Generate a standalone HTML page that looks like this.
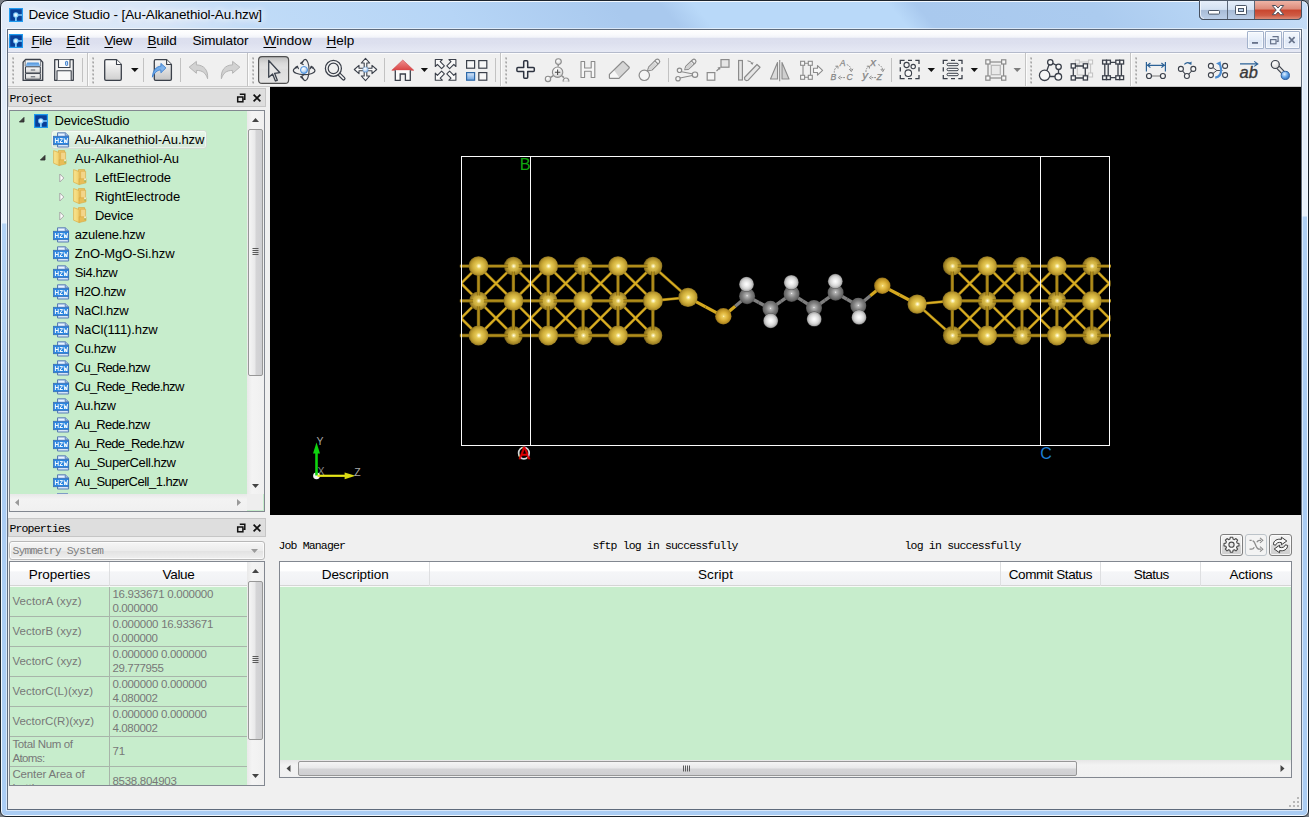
<!DOCTYPE html>
<html>
<head>
<meta charset="utf-8">
<title>Device Studio</title>
<style>
html,body{margin:0;padding:0;}
body{width:1309px;height:817px;overflow:hidden;position:relative;background:#7a7f86;font-family:"Liberation Sans",sans-serif;font-size:13px;color:#000;}
.abs{position:absolute;}
div,span{box-sizing:border-box;}
#frame{position:absolute;left:0;top:0;width:1309px;height:817px;border:1px solid #1c242e;border-radius:7px 7px 6px 6px;background:#dbe8f7;box-shadow:inset 0 0 0 1px #f2f8fe;}
#titlegrad{position:absolute;left:2px;top:2px;width:1305px;height:27px;border-radius:5px 5px 0 0;background:linear-gradient(50deg,#e0ebf8 0px,#d8e6f7 120px,#c0dbf7 200px,#b6d5f6 354px,#a9c9ee 484px,#a9c9ee 520px,#b9d9f9 546px,#b9d9f9 695px,#a9c9ee 716px,#abcbef 850px,#b6d4f4 930px,#c6ddf7 1012px);}
#frameside{position:absolute;left:2px;top:29px;width:1305px;height:786px;border-radius:0 0 4px 4px;background:linear-gradient(180deg,#dbe8f7 0px,#e9f1fb 194px,#b4d4f6 195px,#abcdf4 400px,#abcdf4 100%) 0 0/7px 100% no-repeat,linear-gradient(180deg,#dbe8f7 0px,#e9f1fb 187px,#b0d0f4 188px,#aaccf3 400px,#aaccf3 100%) 100% 0/7px 100% no-repeat,linear-gradient(#abcdf4,#abcdf4) 0 100%/100% 8px no-repeat;}
#client{position:absolute;left:7px;top:29px;width:1295px;height:781px;border:1px solid #5f6b7c;background:#f0f0f0;box-shadow:0 0 0 1px rgba(255,255,255,.55);}
.mono{font-family:"Liberation Mono",monospace;font-size:11.5px;letter-spacing:-0.9px;white-space:nowrap;line-height:12px;}
.t{position:absolute;white-space:nowrap;transform-origin:0 0;}
#title{left:29px;top:6px;font-size:13.5px;line-height:18px;text-shadow:0 0 6px #fff,0 0 10px #fff,0 0 14px rgba(255,255,255,.8);}
#menubar{left:8px;top:30px;width:1293px;height:23px;background:linear-gradient(#ffffff 0%,#fafbfd 20%,#f2f4f9 33%,#dcdfee 38%,#dde0ef 60%,#e6e9f4 100%);border-bottom:1px solid #b4bacb;}
.mi{position:absolute;top:33px;font-size:13.5px;line-height:16px;white-space:nowrap;transform-origin:0 0;}
.mi u{text-decoration:underline;text-underline-offset:1.5px;text-decoration-thickness:1px;}
#toolbar{left:8px;top:53px;width:1293px;height:34px;background:#f0f0f0;border-bottom:1px solid #c9c9c9;}
#viewport{left:270px;top:87px;width:1031px;height:428px;background:#000;}
.dockhdr{position:absolute;background:#dedede;border:1px solid #c6c6c6;}
.green{background:#c7edcc;}
.capbtn{position:absolute;top:1px;height:19px;}
.mdibtn{position:absolute;top:31px;width:17px;height:18px;border:1px solid #a3b2cb;border-radius:1px;background:linear-gradient(#f4f8fd,#e6eefa 50%,#dfe8f6 51%,#e8effa);box-shadow:inset 0 0 0 1px rgba(255,255,255,.6);}
.tr{position:absolute;font-size:13px;line-height:19px;white-space:nowrap;transform-origin:0 50%;}
.pr{position:absolute;font-size:11.5px;line-height:14px;color:#787878;white-space:nowrap;transform-origin:0 0;}
.hd{position:absolute;font-size:13.5px;line-height:16px;white-space:nowrap;text-align:center;}
.sbv{position:absolute;background:linear-gradient(90deg,#e9e9e9,#f4f4f4 30%,#f0f0f0);}
.thumbv{position:absolute;border:1px solid #979797;border-radius:2px;background:linear-gradient(90deg,#f5f5f5 0%,#e9e9ea 45%,#d4d4d6 55%,#cfcfd2 100%);}
.thumbh{position:absolute;border:1px solid #979797;border-radius:2px;background:linear-gradient(180deg,#f5f5f5 0%,#e9e9ea 45%,#d4d4d6 55%,#cfcfd2 100%);}
</style>
<style>
#title{letter-spacing:-0.131px;margin-left:-0.6px}
#m1{letter-spacing:-0.341px;margin-left:-0.6px}
#m2{letter-spacing:-0.070px;margin-left:-0.6px}
#m3{letter-spacing:-0.308px;margin-left:-0.6px}
#m4{letter-spacing:-0.186px;margin-left:-0.6px}
#m5{letter-spacing:-0.126px;margin-left:-0.6px}
#m6{letter-spacing:0.045px;margin-left:-0.6px}
#m7{letter-spacing:0.009px;margin-left:-0.6px}
#dk1{letter-spacing:-0.802px;margin-left:-0.6px}
#tr0{letter-spacing:-0.142px;margin-left:-0.6px}
#tr1{letter-spacing:-0.057px;margin-left:-0.6px}
#tr2{letter-spacing:0.014px;margin-left:-0.6px}
#tr3{letter-spacing:-0.047px;margin-left:-0.6px}
#tr4{letter-spacing:-0.006px;margin-left:-0.6px}
#tr5{letter-spacing:-0.275px;margin-left:-0.6px}
#tr6{letter-spacing:-0.226px;margin-left:-0.6px}
#tr7{letter-spacing:-0.043px;margin-left:-0.6px}
#tr8{letter-spacing:-0.447px;margin-left:-0.6px}
#tr9{letter-spacing:-0.424px;margin-left:-0.6px}
#tr10{letter-spacing:-0.241px;margin-left:-0.6px}
#tr11{letter-spacing:-0.096px;margin-left:-0.6px}
#tr12{letter-spacing:-0.427px;margin-left:-0.6px}
#tr13{letter-spacing:-0.632px;margin-left:-0.6px}
#tr14{letter-spacing:-0.698px;margin-left:-0.6px}
#tr15{letter-spacing:-0.307px;margin-left:-0.6px}
#tr16{letter-spacing:-0.568px;margin-left:-0.6px}
#tr17{letter-spacing:-0.653px;margin-left:-0.6px}
#tr18{letter-spacing:-0.385px;margin-left:-0.6px}
#tr19{letter-spacing:-0.500px;margin-left:-0.6px}
#dk2{letter-spacing:-0.832px;margin-left:-0.6px}
#dk3{letter-spacing:-0.855px;margin-left:-0.6px}
#ph1{letter-spacing:-0.013px;margin-left:-0.6px}
#ph2{letter-spacing:-0.266px;margin-left:-0.6px}
#pk0{letter-spacing:0.112px;margin-left:-0.6px}
#pv0_0{letter-spacing:-0.268px;margin-left:-0.6px}
#pv0_1{letter-spacing:-0.346px;margin-left:-0.6px}
#pk1{letter-spacing:0.062px;margin-left:-0.6px}
#pv1_0{letter-spacing:-0.268px;margin-left:-0.6px}
#pv1_1{letter-spacing:-0.346px;margin-left:-0.6px}
#pk2{letter-spacing:0.014px;margin-left:-0.6px}
#pv2_0{letter-spacing:-0.291px;margin-left:-0.6px}
#pv2_1{letter-spacing:-0.353px;margin-left:-0.6px}
#pk3{letter-spacing:0.055px;margin-left:-0.6px}
#pv3_0{letter-spacing:-0.291px;margin-left:-0.6px}
#pv3_1{letter-spacing:-0.346px;margin-left:-0.6px}
#pk4{letter-spacing:-0.005px;margin-left:-0.6px}
#pv4_0{letter-spacing:-0.291px;margin-left:-0.6px}
#pv4_1{letter-spacing:-0.346px;margin-left:-0.6px}
#pk5_0{letter-spacing:-0.364px;margin-left:-0.6px}
#pk5_1{letter-spacing:-0.599px;margin-left:-0.6px}
#pv5_0{letter-spacing:-0.048px;margin-left:-0.6px}
#pk6_0{letter-spacing:-0.140px;margin-left:-0.6px}
#pk6_1{letter-spacing:0.015px;margin-left:-0.6px}
#pv6_0{letter-spacing:-0.269px;margin-left:-0.6px}
#jm1{letter-spacing:-0.838px;margin-left:-0.6px}
#jm2{letter-spacing:-0.852px;margin-left:-0.6px}
#jm3{letter-spacing:-0.786px;margin-left:-0.6px}
#jh0{letter-spacing:-0.057px;margin-left:-0.6px}
#jh1{letter-spacing:0.114px;margin-left:-0.6px}
#jh2{letter-spacing:-0.395px;margin-left:-0.6px}
#jh3{letter-spacing:-0.564px;margin-left:-0.6px}
#jh4{letter-spacing:-0.154px;margin-left:-0.6px}
</style>
</head>
<body>
<div id="frame"></div>
<div id="titlegrad"></div>
<div id="frameside"></div>
<div id="client"></div>
<!-- title bar -->
<svg class="abs" style="left:9px;top:8px" width="14" height="14" viewBox="0 0 14 14"><rect width="14" height="14" fill="#0a3f98"/><path d="M0 0H14V14H0Z M1.2 1.2V12.8H12.8V1.2Z" fill="#1f9bf0" fill-rule="evenodd"/><path d="M6 6.2 H13 V7.8 H7.8 V13 H6 Z" fill="#7ccbfb"/><circle cx="6.8" cy="7" r="2.7" fill="#7ccbfb"/><circle cx="6.8" cy="7" r="1.7" fill="#e6f5ff"/></svg>
<div id="title" class="t">Device Studio - [Au-Alkanethiol-Au.hzw]</div>
<svg class="abs" style="left:1196px;top:0px" width="110" height="24" viewBox="1196 0 110 24">
<defs>
<linearGradient id="cbg" x1="0" y1="0" x2="0" y2="1"><stop offset="0" stop-color="#e6effa"/><stop offset=".47" stop-color="#d3e1f2"/><stop offset=".52" stop-color="#a8bcd7"/><stop offset="1" stop-color="#bccfe8"/></linearGradient>
<linearGradient id="cbr" x1="0" y1="0" x2="0" y2="1"><stop offset="0" stop-color="#eeb4a6"/><stop offset=".45" stop-color="#dc8a79"/><stop offset=".5" stop-color="#c8452e"/><stop offset=".8" stop-color="#cf5b44"/><stop offset="1" stop-color="#dd8c78"/></linearGradient>
</defs>
<path d="M1199.5 0.5 V15 Q1199.5 19.5 1204 19.5 H1297 Q1301.5 19.5 1301.5 15 V0.5 Z" fill="url(#cbg)" stroke="#4f5b6b" stroke-width="1"/>
<path d="M1254.5 1 V19 H1297 Q1301 19 1301 15 V1 Z" fill="url(#cbr)"/>
<path d="M1199.5 0.5 V15 Q1199.5 19.5 1204 19.5 H1297 Q1301.5 19.5 1301.5 15 V0.5" fill="none" stroke="#46505f" stroke-width="1"/>
<path d="M1227.5 1V19 M1254.5 1V19" stroke="#5a6677" stroke-width="1"/>
<path d="M1200.5 1.5 V15 Q1200.5 18.5 1204 18.5" fill="none" stroke="#f4f9ff" stroke-width="1" opacity=".8"/>
<rect x="1208.5" y="10.5" width="11" height="3.6" rx=".8" fill="#fff" stroke="#4a5667" stroke-width="1"/>
<rect x="1235.5" y="5.5" width="11" height="9" rx=".8" fill="#fff" stroke="#4a5667" stroke-width="1"/>
<rect x="1238.5" y="8.5" width="5" height="3" fill="#bcd1ea" stroke="#4a5667" stroke-width="1"/>
<path d="M1272.3 5.5 h3.4 l2.3 2.6 l2.3 -2.6 h3.4 l-3.9 4.6 l3.9 4.6 h-3.4 l-2.3 -2.6 l-2.3 2.6 h-3.4 l3.9 -4.6 Z" fill="#fff" stroke="#4a4f5c" stroke-width="1" stroke-linejoin="round"/>
</svg>
<!-- menubar -->
<div id="menubar" class="abs"></div>
<svg class="abs" style="left:9px;top:34px" width="14" height="14" viewBox="0 0 14 14"><rect width="14" height="14" fill="#0a3f98"/><path d="M0 0H14V14H0Z M1.2 1.2V12.8H12.8V1.2Z" fill="#1f9bf0" fill-rule="evenodd"/><path d="M6 6.2 H13 V7.8 H7.8 V13 H6 Z" fill="#7ccbfb"/><circle cx="6.8" cy="7" r="2.7" fill="#7ccbfb"/><circle cx="6.8" cy="7" r="1.7" fill="#e6f5ff"/></svg>
<div class="mi" id="m1" style="left:32px"><u>F</u>ile</div>
<div class="mi" id="m2" style="left:67px"><u>E</u>dit</div>
<div class="mi" id="m3" style="left:105px"><u>V</u>iew</div>
<div class="mi" id="m4" style="left:148px"><u>B</u>uild</div>
<div class="mi" id="m5" style="left:193px">Simulator</div>
<div class="mi" id="m6" style="left:264px"><u>W</u>indow</div>
<div class="mi" id="m7" style="left:327px"><u>H</u>elp</div>
<div class="mdibtn" style="left:1247px"></div><div class="mdibtn" style="left:1265px"></div><div class="mdibtn" style="left:1283px"></div>
<svg class="abs" style="left:1247px;top:31px" width="54" height="18" viewBox="1247 31 54 18">
<rect x="1252" y="42" width="6" height="1.8" fill="#66728a"/>
<path d="M1272.5 36.7 h5.6 v4.6 h-1.6" fill="none" stroke="#66728a" stroke-width="1.2"/><rect x="1270.6" y="39.6" width="5.4" height="4.2" fill="#e9f0fa" stroke="#66728a" stroke-width="1.2"/>
<path d="M1289 37.2 l5.6 5.8 M1294.6 37.2 l-5.6 5.8" stroke="#66728a" stroke-width="1.7"/>
</svg>
<!-- toolbar -->
<div id="toolbar" class="abs"></div><div class="abs" style="left:8px;top:53px;width:1293px;height:1px;background:#fcfcfc"></div>
<svg class="abs" style="left:0;top:52px" width="1309" height="36" viewBox="0 52 1309 36">
<defs>
<pattern id="grip" x="0" y="57" width="4" height="4" patternUnits="userSpaceOnUse"><rect x="1" y=".8" width="2" height="2" fill="#bdbdbd"/><rect x="2" y="1.8" width="1" height="1" fill="#a2a2a2"/></pattern>
<linearGradient id="pg" x1="0" y1="0" x2="0" y2="1"><stop offset="0" stop-color="#fdfdfd"/><stop offset="1" stop-color="#cfcfcf"/></linearGradient>
<linearGradient id="pg2" x1="0" y1="0" x2="0" y2="1"><stop offset="0" stop-color="#f6f6f6"/><stop offset="1" stop-color="#d9d9d9"/></linearGradient>
<linearGradient id="bl" x1="0" y1="0" x2="0" y2="1"><stop offset="0" stop-color="#4d93dc"/><stop offset="1" stop-color="#8fc1f2"/></linearGradient>
<radialGradient id="ball" cx=".4" cy=".35" r=".7"><stop offset="0" stop-color="#e8f3ff"/><stop offset=".5" stop-color="#6aa9ea"/><stop offset="1" stop-color="#2f6fbe"/></radialGradient>
<radialGradient id="ball2" cx=".38" cy=".3" r=".8"><stop offset="0" stop-color="#ffffff"/><stop offset=".45" stop-color="#cfe2f7"/><stop offset="1" stop-color="#5b9ae0"/></radialGradient>
<linearGradient id="bl2" x1="0" y1="0" x2="0" y2="1"><stop offset="0" stop-color="#dbe8f8"/><stop offset="1" stop-color="#6ea4e0"/></linearGradient>
<linearGradient id="red" x1="0" y1="0" x2="0" y2="1"><stop offset="0" stop-color="#ee8e8e"/><stop offset="1" stop-color="#d94444"/></linearGradient>
<linearGradient id="selb" x1="0" y1="0" x2="0" y2="1"><stop offset="0" stop-color="#bcbcbc"/><stop offset=".25" stop-color="#dadada"/><stop offset=".44" stop-color="#e2e2e2"/><stop offset=".45" stop-color="#dddddd"/><stop offset="1" stop-color="#e4e4e4"/></linearGradient>
<linearGradient id="gry" x1="0" y1="0" x2="0" y2="1"><stop offset="0" stop-color="#fafafa"/><stop offset="1" stop-color="#c4c4c4"/></linearGradient>
</defs>
<!-- toolbar dividers & grips -->
<g stroke="#c4c4c4" stroke-width="1">
<path d="M87.5 53V86 M247.5 53V86 M500.5 53V86 M1025.5 53V86 M1130.5 53V86"/>
</g>
<g stroke="#fcfcfc" stroke-width="1"><path d="M88.5 53V86 M248.5 53V86 M501.5 53V86 M1026.5 53V86 M1131.5 53V86"/></g>
<g><rect x="12" y="57.3" width="2" height="2" fill="#bdbdbd"/><rect x="13" y="58.3" width="1" height="1" fill="#9f9f9f"/><rect x="12" y="61.3" width="2" height="2" fill="#bdbdbd"/><rect x="13" y="62.3" width="1" height="1" fill="#9f9f9f"/><rect x="12" y="65.3" width="2" height="2" fill="#bdbdbd"/><rect x="13" y="66.3" width="1" height="1" fill="#9f9f9f"/><rect x="12" y="69.3" width="2" height="2" fill="#bdbdbd"/><rect x="13" y="70.3" width="1" height="1" fill="#9f9f9f"/><rect x="12" y="73.3" width="2" height="2" fill="#bdbdbd"/><rect x="13" y="74.3" width="1" height="1" fill="#9f9f9f"/><rect x="12" y="77.3" width="2" height="2" fill="#bdbdbd"/><rect x="13" y="78.3" width="1" height="1" fill="#9f9f9f"/><rect x="12" y="81.3" width="2" height="2" fill="#bdbdbd"/><rect x="13" y="82.3" width="1" height="1" fill="#9f9f9f"/><rect x="92" y="57.3" width="2" height="2" fill="#bdbdbd"/><rect x="93" y="58.3" width="1" height="1" fill="#9f9f9f"/><rect x="92" y="61.3" width="2" height="2" fill="#bdbdbd"/><rect x="93" y="62.3" width="1" height="1" fill="#9f9f9f"/><rect x="92" y="65.3" width="2" height="2" fill="#bdbdbd"/><rect x="93" y="66.3" width="1" height="1" fill="#9f9f9f"/><rect x="92" y="69.3" width="2" height="2" fill="#bdbdbd"/><rect x="93" y="70.3" width="1" height="1" fill="#9f9f9f"/><rect x="92" y="73.3" width="2" height="2" fill="#bdbdbd"/><rect x="93" y="74.3" width="1" height="1" fill="#9f9f9f"/><rect x="92" y="77.3" width="2" height="2" fill="#bdbdbd"/><rect x="93" y="78.3" width="1" height="1" fill="#9f9f9f"/><rect x="92" y="81.3" width="2" height="2" fill="#bdbdbd"/><rect x="93" y="82.3" width="1" height="1" fill="#9f9f9f"/><rect x="252" y="57.3" width="2" height="2" fill="#bdbdbd"/><rect x="253" y="58.3" width="1" height="1" fill="#9f9f9f"/><rect x="252" y="61.3" width="2" height="2" fill="#bdbdbd"/><rect x="253" y="62.3" width="1" height="1" fill="#9f9f9f"/><rect x="252" y="65.3" width="2" height="2" fill="#bdbdbd"/><rect x="253" y="66.3" width="1" height="1" fill="#9f9f9f"/><rect x="252" y="69.3" width="2" height="2" fill="#bdbdbd"/><rect x="253" y="70.3" width="1" height="1" fill="#9f9f9f"/><rect x="252" y="73.3" width="2" height="2" fill="#bdbdbd"/><rect x="253" y="74.3" width="1" height="1" fill="#9f9f9f"/><rect x="252" y="77.3" width="2" height="2" fill="#bdbdbd"/><rect x="253" y="78.3" width="1" height="1" fill="#9f9f9f"/><rect x="252" y="81.3" width="2" height="2" fill="#bdbdbd"/><rect x="253" y="82.3" width="1" height="1" fill="#9f9f9f"/><rect x="505" y="57.3" width="2" height="2" fill="#bdbdbd"/><rect x="506" y="58.3" width="1" height="1" fill="#9f9f9f"/><rect x="505" y="61.3" width="2" height="2" fill="#bdbdbd"/><rect x="506" y="62.3" width="1" height="1" fill="#9f9f9f"/><rect x="505" y="65.3" width="2" height="2" fill="#bdbdbd"/><rect x="506" y="66.3" width="1" height="1" fill="#9f9f9f"/><rect x="505" y="69.3" width="2" height="2" fill="#bdbdbd"/><rect x="506" y="70.3" width="1" height="1" fill="#9f9f9f"/><rect x="505" y="73.3" width="2" height="2" fill="#bdbdbd"/><rect x="506" y="74.3" width="1" height="1" fill="#9f9f9f"/><rect x="505" y="77.3" width="2" height="2" fill="#bdbdbd"/><rect x="506" y="78.3" width="1" height="1" fill="#9f9f9f"/><rect x="505" y="81.3" width="2" height="2" fill="#bdbdbd"/><rect x="506" y="82.3" width="1" height="1" fill="#9f9f9f"/><rect x="1030" y="57.3" width="2" height="2" fill="#bdbdbd"/><rect x="1031" y="58.3" width="1" height="1" fill="#9f9f9f"/><rect x="1030" y="61.3" width="2" height="2" fill="#bdbdbd"/><rect x="1031" y="62.3" width="1" height="1" fill="#9f9f9f"/><rect x="1030" y="65.3" width="2" height="2" fill="#bdbdbd"/><rect x="1031" y="66.3" width="1" height="1" fill="#9f9f9f"/><rect x="1030" y="69.3" width="2" height="2" fill="#bdbdbd"/><rect x="1031" y="70.3" width="1" height="1" fill="#9f9f9f"/><rect x="1030" y="73.3" width="2" height="2" fill="#bdbdbd"/><rect x="1031" y="74.3" width="1" height="1" fill="#9f9f9f"/><rect x="1030" y="77.3" width="2" height="2" fill="#bdbdbd"/><rect x="1031" y="78.3" width="1" height="1" fill="#9f9f9f"/><rect x="1030" y="81.3" width="2" height="2" fill="#bdbdbd"/><rect x="1031" y="82.3" width="1" height="1" fill="#9f9f9f"/><rect x="1135" y="57.3" width="2" height="2" fill="#bdbdbd"/><rect x="1136" y="58.3" width="1" height="1" fill="#9f9f9f"/><rect x="1135" y="61.3" width="2" height="2" fill="#bdbdbd"/><rect x="1136" y="62.3" width="1" height="1" fill="#9f9f9f"/><rect x="1135" y="65.3" width="2" height="2" fill="#bdbdbd"/><rect x="1136" y="66.3" width="1" height="1" fill="#9f9f9f"/><rect x="1135" y="69.3" width="2" height="2" fill="#bdbdbd"/><rect x="1136" y="70.3" width="1" height="1" fill="#9f9f9f"/><rect x="1135" y="73.3" width="2" height="2" fill="#bdbdbd"/><rect x="1136" y="74.3" width="1" height="1" fill="#9f9f9f"/><rect x="1135" y="77.3" width="2" height="2" fill="#bdbdbd"/><rect x="1136" y="78.3" width="1" height="1" fill="#9f9f9f"/><rect x="1135" y="81.3" width="2" height="2" fill="#bdbdbd"/><rect x="1136" y="82.3" width="1" height="1" fill="#9f9f9f"/></g>
<!-- separators -->
<g stroke="#c2c2c2" stroke-width="1"><path d="M82.5 58V82 M143.5 58V82 M180.5 58V82 M384.5 58V82 M495.5 58V82 M668.5 58V82 M891.5 58V82"/></g>

<!-- 1 drawer -->
<g stroke="#3b404a" stroke-width="1.3" stroke-linejoin="round">
<path d="M25.6 59.5 H40.2 L42.7 62.2 V80.4 H23.1 V62.2 Z" fill="url(#pg2)"/>
<path d="M27.2 62.5 H38.6 L40.4 66.4 H25.4 Z" fill="url(#bl)" stroke="none"/>
<path d="M25.2 60.6 L25.2 66 M40.6 60.6 V66" stroke="#6a6f78" stroke-width=".9" fill="none"/>
<rect x="25.5" y="66.8" width="14.8" height="6.2" fill="url(#pg)" stroke-width="1"/>
<rect x="25.5" y="73.6" width="14.8" height="5.6" fill="url(#pg)" stroke-width="1"/>
<path d="M30.8 70 H35.2 M30.8 76.8 H35.2" stroke="#555b66" stroke-width="1"/>
</g>
<!-- 2 floppy -->
<g stroke="#3b404a" stroke-width="1.3" stroke-linejoin="round">
<path d="M54.7 59.7 H73.3 V80.3 H54.7 Z" fill="#f1f1f1"/>
<path d="M58.5 59.7 V67.5 H70 V59.7" fill="#fbfbfb" stroke-width="1.1"/>
<rect x="65.6" y="61.4" width="2" height="4" rx=".6" fill="#cfe2f8" stroke="#2b74c9" stroke-width=".9"/>
<path d="M57 80.3 V70.8 H71.2 V80.3" fill="#f8f8f8" stroke-width="1.1"/>
</g>
<!-- 3 new doc -->
<path d="M106 59.7 H116.5 L121.3 64.5 V79 Q121.3 80.3 120 80.3 H106 Q104.7 80.3 104.7 79 V61 Q104.7 59.7 106 59.7 Z" fill="url(#pg)" stroke="#3b404a" stroke-width="1.3" stroke-linejoin="round"/>
<path d="M116.5 59.7 V64.5 H121.3" fill="#fff" stroke="#3b404a" stroke-width="1.1" stroke-linejoin="round"/>
<path d="M131 68 H138.6 L134.8 72 Z" fill="#111"/>
<!-- 4 import -->
<path d="M155.6 59.7 H166.6 L171.4 64.5 V79 Q171.4 80.3 170.1 80.3 H155.6 Q154.3 80.3 154.3 79 V61 Q154.3 59.7 155.6 59.7 Z" fill="url(#gry)" stroke="#3b404a" stroke-width="1.3" stroke-linejoin="round"/>
<path d="M166.6 59.7 V64.5 H171.4" fill="#f6f6f6" stroke="#3b404a" stroke-width="1.1" stroke-linejoin="round"/>
<defs><linearGradient id="imp" x1="0" y1="0" x2="1" y2="1"><stop offset="0" stop-color="#4f95e2"/><stop offset="1" stop-color="#a6ccf5"/></linearGradient></defs>
<path d="M152.4 77.2 C152.8 70.6 156 66.4 160.9 66.2 V63.4 L165.9 67.9 L160.9 72.8 V70 C157.3 70 154.6 72.4 152.4 77.2 Z" fill="url(#imp)" stroke="#3a7fd0" stroke-width=".9" stroke-linejoin="round"/>
<!-- undo / redo -->
<path d="M189.2 67.1 L196.4 61.4 V64.9 C204.3 65 208.3 70.5 207.6 78.7 C205.8 73 202.6 70.4 196.4 70.4 V73.3 Z" fill="#d2d2d2" stroke="#b4b4b4" stroke-width="1" stroke-linejoin="round"/>
<path d="M239.8 67.1 L232.6 61.4 V64.9 C224.7 65 220.7 70.5 221.4 78.7 C223.2 73 226.4 70.4 232.6 70.4 V73.3 Z" fill="#d2d2d2" stroke="#b4b4b4" stroke-width="1" stroke-linejoin="round"/>

<!-- select (pressed) -->
<rect x="258.6" y="56.6" width="30" height="26.8" rx="3.5" fill="url(#selb)" stroke="#505050" stroke-width="1.2"/>
<path d="M268.7 60.5 V77.3 L272.6 74 L275.4 81 L277.3 80.3 L274.6 73.3 L279.9 72.7 Z" fill="#e6e6e6" stroke="#3b424d" stroke-width="1.3" stroke-linejoin="round"/>
<!-- rotate -->
<g fill="none" stroke="#3b404a" stroke-width="1.15" stroke-linecap="round" stroke-linejoin="round">
<path d="M297.2 67.4 A10.8 4.1 0 1 0 311.4 67.5"/>
<path d="M295.3 67.6 L297.4 66.2 L298.4 68.6 M313.2 67.6 L311.2 66.3 L310.2 68.7"/>
<path d="M302.2 63.2 A3.9 10.6 0 1 1 302.2 76.9"/>
<path d="M302.9 61.4 L300.6 63.3 L303.2 64.6 M302.9 78.7 L300.6 76.8 L303.2 75.5"/>
</g>
<circle cx="304" cy="70" r="3.5" fill="url(#ball2)" stroke="#3a86d8" stroke-width=".9"/>
<!-- zoom -->
<path d="M339.3 74.3 L343.6 78.6" stroke="#3b404a" stroke-width="3.9" stroke-linecap="round"/>
<path d="M339.3 74.3 L343.5 78.5" stroke="#f6f6f6" stroke-width="1.6" stroke-linecap="round"/>
<circle cx="333.4" cy="68.4" r="8" fill="#f3f3f3" stroke="#3b404a" stroke-width="1.25"/>
<circle cx="333.4" cy="68.4" r="5.2" fill="#f0f0f0" stroke="#3b404a" stroke-width="1.2"/>
<!-- move -->
<path d="M365.5 58.3 L369.7 63 H366.8 V68.2 H372 V65.3 L376.7 69.5 L372 73.7 V70.8 H366.8 V76 H369.7 L365.5 80.7 L361.3 76 H364.2 V70.8 H359 V73.7 L354.3 69.5 L359 65.3 V68.2 H364.2 V63 H361.3 Z" fill="#fafafa" stroke="#3b404a" stroke-width="1.1" stroke-linejoin="round"/>
<circle cx="365.5" cy="69.6" r="2.7" fill="url(#ball2)" stroke="#6fa0d8" stroke-width=".5"/>
<!-- home -->
<path d="M391.8 70.3 L402.8 60 L413.8 70.3 Z" fill="url(#red)" stroke="#cf4a4e" stroke-width=".6" stroke-linejoin="round"/>
<path d="M395.3 70.3 V80.3 H400.2 V74 H405.4 V80.3 H410.3 V70.3" fill="#fbfbfb" stroke="#3b404a" stroke-width="1.3" stroke-linejoin="miter"/>
<path d="M420.8 68 H428 L424.4 72 Z" fill="#111"/>
<!-- fit (4 arrows) -->
<g fill="#fafafa" stroke="#3b404a" stroke-width="1.1" stroke-linejoin="round">
<path d="M435.3 59.5 H442.3 L440.2 61.6 L444.4 65.8 L441.6 68.6 L437.4 64.4 L435.3 66.5 Z"/>
<path d="M455.9 59.5 H448.9 L451 61.6 L446.8 65.8 L449.6 68.6 L453.8 64.4 L455.9 66.5 Z"/>
<path d="M435.3 80.2 H442.3 L440.2 78.1 L444.4 73.9 L441.6 71.1 L437.4 75.3 L435.3 73.2 Z"/>
<path d="M455.9 80.2 H448.9 L451 78.1 L446.8 73.9 L449.6 71.1 L453.8 75.3 L455.9 73.2 Z"/>
</g>
<!-- grid -->
<g stroke="#3b404a" stroke-width="1.2" fill="#f7f7f7">
<rect x="466.6" y="60.6" width="8" height="7.6"/><rect x="478.8" y="60.6" width="8" height="7.6"/><rect x="478.8" y="72.6" width="8" height="7.6"/>
<rect x="466.6" y="72.6" width="8" height="7.6" fill="url(#bl2)" stroke="#2f69a8"/>
</g>

<!-- plus -->
<path d="M523.7 61.7 Q523.7 60.7 524.7 60.7 H526.7 Q527.7 60.7 527.7 61.7 V67.4 H533.3 Q534.3 67.4 534.3 68.4 V70.4 Q534.3 71.4 533.3 71.4 H527.7 V77.3 Q527.7 78.3 526.7 78.3 H524.7 Q523.7 78.3 523.7 77.3 V71.4 H517.9 Q516.9 71.4 516.9 70.4 V68.4 Q516.9 67.4 517.9 67.4 H523.7 Z" fill="#f4f4f4" stroke="#2d3340" stroke-width="1.5" stroke-linejoin="round"/>
<!-- add atom -->
<defs><radialGradient id="gball" cx=".4" cy=".3" r=".8"><stop offset="0" stop-color="#ffffff"/><stop offset=".6" stop-color="#e4e4e4"/><stop offset="1" stop-color="#bdbdbd"/></radialGradient></defs>
<g stroke="#8d8d8d" stroke-width="1.1" fill="url(#gball)">
<path d="M558.2 66.5 V64 M553.3 75.6 L550.3 77.6 M561.8 75.8 L564 77.6" fill="none" stroke-width="1.5"/>
<circle cx="558.4" cy="61.6" r="2.9"/><circle cx="548" cy="79" r="2.7"/><path d="M563.2 81.6 A2.9 2.9 0 1 1 568.8 81.6" />
<circle cx="557.6" cy="72.2" r="5.2"/>
<path d="M557.6 69.5 V74.9 M554.9 72.2 H560.3" stroke="#4b4b4b" stroke-width="1.1"/>
</g>
<!-- H -->
<path d="M581 61.5 H584.6 V68 H591.2 V61.5 H594.8 V77.5 H591.2 V71.2 H584.6 V77.5 H581 Z" fill="#f7f7f7" stroke="#8b8b8b" stroke-width="1.1" stroke-linejoin="round"/>
<!-- eraser -->
<path d="M609.4 74.4 L622.3 61.7 Q622.9 61.1 623.5 61.7 L629 67 Q629.6 67.7 629 68.3 L619 78.4 H610 Q609.4 78.4 609.4 77.8 Z" fill="#f8f8f8"/>
<path d="M613.9 70 L622.9 61.3 L629.3 67.6 L619.3 77.6 Z" fill="#d6d6d6"/>
<path d="M609.4 74.4 L622.3 61.7 Q622.9 61.1 623.5 61.7 L629 67 Q629.6 67.7 629 68.3 L619 78.4 H610 Q609.4 78.4 609.4 77.8 Z" fill="none" stroke="#8b8b8b" stroke-width="1.2" stroke-linejoin="round"/>
<!-- bond pen -->
<g stroke="#8b8b8b" stroke-width="1.2" fill="#f5f5f5">
<circle cx="644.3" cy="75.3" r="5.2"/>
<path d="M647.5 71 L648.8 66.8 L656 59.6 Q657.6 58.4 659 59.8 Q660.4 61.3 659.2 62.8 L652 70 Z" stroke-linejoin="round"/><path d="M648.2 70.3 L649.2 67.3 L654.2 62.3 L656.6 64.7 L651.6 69.6 Z" fill="#d4d4d4" stroke="none"/>
<path d="M654.8 60.8 L658 64" fill="none"/>
</g>
<!-- measure pen -->
<g stroke="#8b8b8b" stroke-width="1.2" fill="#f5f5f5">
<path d="M680.3 71.5 L694.5 74.3 M678.8 78.3 L693.5 75.3" fill="none" stroke-width="1.1"/>
<circle cx="679.5" cy="70.3" r="2.2"/><circle cx="678" cy="78.7" r="2.2"/><circle cx="695" cy="74.7" r="2.7"/>
<path d="M684.8 69.6 L685.7 66.4 L692.6 59.7 Q694.1 58.6 695.4 59.9 Q696.6 61.3 695.5 62.7 L688.3 69.4 Z" stroke-linejoin="round" fill="#f3f3f3"/><path d="M685.2 69.2 L686 66.8 L690.8 62.2 L693.2 64.6 L688.2 69 Z" fill="#d2d2d2" stroke="none"/><path d="M691.4 60.9 L694.3 63.8" fill="none"/>
</g>
<!-- scale squares -->
<g stroke="#8b8b8b" stroke-width="1.2" fill="#f5f5f5">
<rect x="707.2" y="72.6" width="7.6" height="7.6"/>
<rect x="721" y="59.6" width="8" height="7.6" fill="#e6e6e6"/>
<path d="M716.5 71 L720 67.6" fill="none"/><path d="M720.6 66.9 l-3.2 .6 l2.6 2.6 Z" fill="#8b8b8b" stroke="none"/>
</g>
<!-- rotate bar -->
<g stroke="#8b8b8b" stroke-width="1.2" fill="#e6e6e6">
<rect x="738.6" y="60.5" width="3.8" height="19.5"/>
<path d="M744.5 77.5 L757 64.5 L760 67.3 L748 80.3 Q746 81 744.8 79.7 Z" stroke-linejoin="round"/>
<path d="M747.5 60.8 Q751.5 61 752.2 64" fill="none" stroke-width="1"/><path d="M753.6 62.3 l-1.3 2.6 l-1.9 -2 Z" fill="#8b8b8b" stroke="none"/>
</g>
<!-- mirror -->
<g stroke="#8b8b8b" stroke-width="1.1">
<path d="M779.7 60 V81.3" fill="none"/>
<path d="M777.5 62.5 V79 H770.5 Z" fill="#dcdcdc" stroke-linejoin="round"/>
<path d="M782 62.5 V79 H789 Z" fill="#cfcfcf" stroke-linejoin="round"/>
</g>
<!-- move group -->
<g stroke="#8b8b8b" stroke-width="1.1" fill="#f7f7f7">
<path d="M803 63.3 H810.5 V77.3 H803 Z" fill="none"/>
<rect x="800.6" y="61.3" width="4" height="4"/><rect x="808.3" y="61.3" width="4" height="4"/><rect x="800.6" y="75.3" width="4" height="4"/><rect x="808.3" y="75.3" width="4" height="4"/>
<path d="M813.5 68.3 H817.5 V65.6 L822.6 70.4 L817.5 75.2 V72.5 H813.5 Z" stroke-linejoin="round"/>
</g>
<!-- ABC -->
<g fill="#868686" stroke="#868686" stroke-width=".25" font-family="Liberation Sans" font-style="italic" font-size="8.6px">
<text x="839.8" y="66.4">A</text><text x="830.4" y="80.4">B</text><text x="846.4" y="80.4">C</text>
</g>
<g fill="none" stroke="#8c8c8c" stroke-width="1" stroke-dasharray="1.8 .9">
<path d="M846.8 64.6 Q850.8 66 851.3 70.6 M845 77.6 H839.6 M834.3 72.6 Q834 68.6 837.6 66.3"/>
</g>
<path d="M849.3 69 l2 2.6 l1.6 -2.8 M840.6 76 l-2.3 1.6 l2.3 1.6 M835.4 66.2 h2.6 v2.4" fill="none" stroke="#8c8c8c" stroke-width="1"/>
<!-- xyz -->
<g fill="#868686" stroke="#868686" stroke-width=".25" font-family="Liberation Sans" font-style="italic" font-size="11.6px">
<text x="870.3" y="65.7">x</text><text x="862.3" y="78.5">y</text><text x="876.6" y="79.8">z</text>
</g>
<g fill="none" stroke="#8c8c8c" stroke-width="1" stroke-dasharray="1.8 .9">
<path d="M878.3 64.6 Q882.3 66 882.8 70.6 M876 77.6 H870.6 M866 72 Q865.6 68.4 869 66.3"/>
</g>
<path d="M880.8 69 l2 2.6 l1.6 -2.8 M871.6 76 l-2.3 1.6 l2.3 1.6 M866.8 66.2 h2.6 v2.4" fill="none" stroke="#8c8c8c" stroke-width="1"/>

<!-- select dashed -->
<g fill="none" stroke="#3b404a" stroke-width="1.3">
<path d="M900.3 64 V60.3 H904.6 M908 60.3 H912 M915.3 60.3 H919 V64 M919 67.3 V71.6 M919 75 V78.7 H915.3 M912 78.7 H908 M904.6 78.7 H900.3 V75 M900.3 71.6 V67.3"/>
<circle cx="906.6" cy="65" r="2.6" fill="#f7f7f7" stroke-width="1.1"/><circle cx="913.2" cy="66.6" r="2.2" fill="#f7f7f7" stroke-width="1.1"/><circle cx="908.3" cy="73.2" r="3.3" fill="#f7f7f7" stroke-width="1.1"/>
</g>
<path d="M927.6 68 H935 L931.3 72 Z" fill="#111"/>
<!-- align dashed -->
<g fill="none" stroke="#3b404a" stroke-width="1.3">
<path d="M943.3 64 V60.3 H947.6 M951 60.3 H955 M958.3 60.3 H962 V64 M962 67.3 V71.6 M962 75 V78.7 H958.3 M955 78.7 H951 M947.6 78.7 H943.3 V75 M943.3 71.6 V67.3"/>
<rect x="947" y="63.3" width="11.3" height="2.4" rx="1.2" fill="#f7f7f7" stroke-width="1"/><rect x="947" y="68.3" width="11.3" height="2.4" rx="1.2" fill="#f7f7f7" stroke-width="1"/><rect x="947" y="73.3" width="11.3" height="2.4" rx="1.2" fill="#f7f7f7" stroke-width="1"/>
</g>
<path d="M970.7 68 H978 L974.3 72 Z" fill="#111"/>
<!-- frame -->
<g stroke="#8b8b8b" stroke-width="1.2" fill="#f7f7f7">
<rect x="988" y="62" width="15.6" height="16" fill="none"/>
<rect x="991.3" y="65.3" width="9" height="9.4" fill="#e9e9e9" stroke="#b5b5b5"/>
<rect x="985.8" y="59.8" width="4.2" height="4.2"/><rect x="1001.6" y="59.8" width="4.2" height="4.2"/><rect x="985.8" y="76" width="4.2" height="4.2"/><rect x="1001.6" y="76" width="4.2" height="4.2"/>
</g>
<path d="M1013.5 68 H1021 L1017.2 72 Z" fill="#7d7d7d"/>

<!-- molecule -->
<g stroke="#3b404a" stroke-width="1.3" fill="#f7f7f7">
<path d="M1046 73 L1050 62 L1058.5 66.5 V76.5 H1046" fill="none"/>
<circle cx="1050.3" cy="62.3" r="2.7"/><circle cx="1058.6" cy="66.8" r="2.7"/><circle cx="1058.3" cy="76.8" r="3.3"/><circle cx="1044.6" cy="75.3" r="5.2"/>
</g>
<!-- crystal -->
<g stroke="#c2c2c2" stroke-width="1" fill="#f4f4f4">
<path d="M1077.3 62 H1090.6 V75 H1077.3 Z" fill="none"/>
<rect x="1075.3" y="60" width="4" height="4"/><rect x="1088.6" y="60" width="4" height="4"/><rect x="1088.6" y="73" width="4" height="4"/>
</g>
<g stroke="#3b404a" stroke-width="1.3" fill="#f7f7f7">
<path d="M1073.3 66 H1085.3 V78 H1073.3 Z" fill="none"/>
<rect x="1071.2" y="63.8" width="4.2" height="4.2"/><rect x="1083.3" y="63.8" width="4.2" height="4.2"/><rect x="1071.2" y="75.8" width="4.2" height="4.2"/><rect x="1083.3" y="75.8" width="4.2" height="4.2"/>
</g>
<!-- device -->
<g stroke="#3b404a" stroke-width="1.3" fill="#f7f7f7">
<path d="M1104.8 62 V78 M1108.2 62 V78 M1118 62 V78 M1121.4 62 V78 M1108.5 62.3 H1118 M1108.5 77.7 H1118" fill="none"/>
<rect x="1102.6" y="60.2" width="3.8" height="3.8"/><rect x="1106.6" y="60.2" width="3.8" height="3.8"/><rect x="1115.8" y="60.2" width="3.8" height="3.8"/><rect x="1119.8" y="60.2" width="3.8" height="3.8"/>
<rect x="1102.6" y="75.8" width="3.8" height="3.8"/><rect x="1106.6" y="75.8" width="3.8" height="3.8"/><rect x="1115.8" y="75.8" width="3.8" height="3.8"/><rect x="1119.8" y="75.8" width="3.8" height="3.8"/>
</g>

<!-- measure distance -->
<g fill="none" stroke="#2b6196" stroke-width="1.2">
<path d="M1146.4 62 V71.6 M1165.4 62 V71.6 M1147.5 65.3 H1164.5"/>
<path d="M1150.4 63 L1147.6 65.3 L1150.4 67.6 M1161.4 63 L1164.2 65.3 L1161.4 67.6"/>
</g>
<g stroke="#3b404a" stroke-width="1.2" fill="#f7f7f7"><path d="M1152 76 H1160" stroke="#8a8a8a" fill="none"/><circle cx="1149" cy="76" r="2.5"/><circle cx="1162.9" cy="76" r="2.5"/></g>
<!-- angle -->
<g stroke="#3b404a" stroke-width="1.1" fill="#f7f7f7">
<path d="M1181.3 69.5 L1187 76 L1193 69.5" fill="none"/>
<circle cx="1180.9" cy="68.9" r="2.5"/><circle cx="1193.3" cy="68.9" r="2.5"/><circle cx="1186.9" cy="76" r="2.5"/>
</g>
<path d="M1184.3 64.3 Q1187 61.6 1190 63.2" fill="none" stroke="#2b6196" stroke-width="1.1"/><path d="M1191.6 61.4 l-.2 3.6 l-3.2 -1.5 Z" fill="#2b6196"/>
<!-- torsion -->
<g stroke="#3b404a" stroke-width="1.1" fill="#f7f7f7">
<path d="M1212.6 67.3 L1216.8 70.5 L1212.6 73.7 M1216.8 70.5 H1222.5" fill="none" stroke-width=".9"/>
<circle cx="1210.9" cy="65.9" r="2.5"/><circle cx="1225.1" cy="65.9" r="2.5"/><circle cx="1210.9" cy="75.1" r="2.5"/><circle cx="1225.1" cy="75.1" r="2.5"/>
</g>
<path d="M1215.2 77.6 Q1221.6 76.8 1221 69 Q1220.6 64.6 1218.8 63" fill="none" stroke="#4a8bd0" stroke-width="2.1"/><path d="M1216 63.4 l4.6 -2.2 l.4 4.8 Z" fill="#4a8bd0"/>
<!-- ab -->
<path d="M1240 63.9 H1257.6 M1254.2 61.4 L1257.8 63.9 L1254.2 66.4" stroke="#2b6196" stroke-width="1.1" fill="none"/>
<text x="1239.6" y="78" font-family="Liberation Sans" font-style="italic" font-size="15.6px" fill="#383838" stroke="#383838" stroke-width=".35" textLength="18.2" lengthAdjust="spacingAndGlyphs">ab</text>
<!-- bond -->
<path d="M1278 67.2 L1283 72.6" stroke="#3b404a" stroke-width="4.4" fill="none"/><path d="M1278 67.2 L1283 72.6" stroke="#e4e4e4" stroke-width="2.2" fill="none"/>
<circle cx="1275.3" cy="64.5" r="4" fill="url(#gball)" stroke="#3b404a" stroke-width="1.2"/>
<circle cx="1285.3" cy="75.4" r="4.1" fill="url(#ball)" stroke="#2d5f9f" stroke-width="1"/>
</svg>

<!-- Project dock -->
<div class="dockhdr" style="left:8px;top:88px;width:258px;height:19px"></div>
<div class="t mono" id="dk1" style="left:10px;top:93px">Project</div>
<svg class="abs" style="left:236px;top:93px" width="28" height="12" viewBox="0 0 28 12"><path d="M3.8 1.2 H8.8 V6.2 H7.4" fill="none" stroke="#111" stroke-width="1.5"/><rect x="1.7" y="4" width="5.2" height="4.8" fill="#dedede" stroke="#111" stroke-width="1.5"/><path d="M17.6 1.6 L24.4 8.4 M24.4 1.6 L17.6 8.4" stroke="#111" stroke-width="1.7"/></svg>
<div class="abs" style="left:9px;top:110px;width:256px;height:402px;border:1px solid #828790;background:#c7edcc"></div>
<div class="sbv" style="left:247px;top:111px;width:17px;height:383px"></div>
<div class="thumbv" style="left:248px;top:129px;width:15px;height:247px"></div>
<svg class="abs" style="left:247px;top:111px" width="18" height="383" viewBox="0 0 18 383"><path d="M5 11 L8.5 7 L12 11 Z" fill="#444"/><path d="M5 373 L12 373 L8.5 377 Z" fill="#444"/><path d="M5.5 137.5h6M5.5 139.5h6M5.5 141.5h6M5.5 143.5h6" stroke="#5a5a5a" stroke-width="1"/></svg>
<div class="abs" style="left:247px;top:494px;width:16px;height:16px;background:#eeeeee"></div>
<div class="abs" style="left:10px;top:494px;width:237px;height:17px;background:linear-gradient(#e8e8e8,#f3f3f3 30%,#f0f0f0)"></div>
<svg class="abs" style="left:10px;top:494px" width="237" height="17" viewBox="0 0 237 17"><path d="M9 5 L9 12 L5 8.5 Z" fill="#9a9a9a"/><path d="M227 5 L227 12 L231 8.5 Z" fill="#9a9a9a"/></svg>
<svg class="abs" style="left:18px;top:116px" width="7" height="7" viewBox="0 0 7 7"><path d="M6 1.4 V6 H1.4 Z" fill="#404040" stroke="#2a2a2a" stroke-width=".8" stroke-linejoin="round"/></svg>
<svg class="abs" style="left:34px;top:114px" width="14" height="14" viewBox="0 0 14 14"><rect width="14" height="14" fill="#0a3f98"/><path d="M0 0H14V14H0Z M1.2 1.2V12.8H12.8V1.2Z" fill="#1f9bf0" fill-rule="evenodd"/><path d="M6 6.2 H13 V7.8 H7.8 V13 H6 Z" fill="#7ccbfb"/><circle cx="6.8" cy="7" r="2.7" fill="#7ccbfb"/><circle cx="6.8" cy="7" r="1.7" fill="#e6f5ff"/></svg>
<div class="tr" id="tr0" style="left:55.0px;top:111px">DeviceStudio</div>
<div class="abs" style="left:51px;top:130px;width:156px;height:19px;border:1px solid #d3ddd3;border-radius:3px;background:linear-gradient(rgba(255,255,255,.62),rgba(235,238,236,.55) 60%,rgba(222,228,224,.6));box-shadow:inset 0 0 0 1px rgba(255,255,255,.45)"></div>
<svg class="abs" style="left:53px;top:132px" width="17" height="16" viewBox="0 0 17 16"><path d="M4.5 .8 H12.3 L15.6 3.8 V15 H4.5 Z" fill="#cfe3fb" stroke="#5b7eb2" stroke-width="1"/><path d="M12.3 .8 V3.8 H15.6" fill="#9dbde6" stroke="#5b7eb2" stroke-width=".8"/><path d="M6 2.6 H11 M6 13.4 H14" stroke="#eaf3ff" stroke-width="1.2"/><rect x=".5" y="4.3" width="15" height="8.4" fill="#2b86e0" stroke="#3b6fb6" stroke-width=".8"/><g stroke="#fff" stroke-width=".95" fill="none"><path d="M2.4 6.1V11M5.2 6.1V11M2.4 8.5H5.2"/><path d="M6.8 6.6H9.6L6.8 10.5H9.8"/><path d="M11.1 6.1L11.8 11L12.8 7.8L13.8 11L14.5 6.1"/></g></svg>
<div class="tr" id="tr1" style="left:75.4px;top:130px">Au-Alkanethiol-Au.hzw</div>
<svg class="abs" style="left:39px;top:154px" width="7" height="7" viewBox="0 0 7 7"><path d="M6 1.4 V6 H1.4 Z" fill="#404040" stroke="#2a2a2a" stroke-width=".8" stroke-linejoin="round"/></svg>
<svg class="abs" style="left:53px;top:150px" width="15" height="17" viewBox="0 0 15 17"><defs><linearGradient id="fg" x1="0" y1="0" x2="1" y2="0"><stop offset="0" stop-color="#f9e692"/><stop offset="1" stop-color="#efcf6c"/></linearGradient></defs><path d="M5.5 .6 H11.6 V12.6 H5.5 Z" fill="#eec66a" stroke="#d9a93f" stroke-width=".7"/><path d="M7.6 2.2 H12.6 V13.6 H7.6 Z" fill="#f3d58a" stroke="#d9a93f" stroke-width=".6"/><path d="M.6 .6 L6.2 2.6 V15.6 L.6 13.2 Z" fill="url(#fg)" stroke="#dcae45" stroke-width=".7" stroke-linejoin="round"/><path d="M6.2 9.8 H13 V13.8 L6.2 15.6 Z" fill="#e8bd58" stroke="#d9a93f" stroke-width=".6"/><rect x="11.4" y="9.2" width="1.3" height="2.3" rx=".6" fill="#fff"/><rect x="11.4" y="11.5" width="1.3" height=".9" fill="#4cae4c"/></svg>
<div class="tr" id="tr2" style="left:75.4px;top:149px">Au-Alkanethiol-Au</div>
<svg class="abs" style="left:59px;top:173px" width="6" height="10" viewBox="0 0 6 10"><path d="M.8 1 L4.8 5 L.8 9 Z" fill="#fdfdfd" stroke="#a6a6a6" stroke-width="1" stroke-linejoin="round"/></svg>
<svg class="abs" style="left:73px;top:169px" width="15" height="17" viewBox="0 0 15 17"><defs><linearGradient id="fg" x1="0" y1="0" x2="1" y2="0"><stop offset="0" stop-color="#f9e692"/><stop offset="1" stop-color="#efcf6c"/></linearGradient></defs><path d="M5.5 .6 H11.6 V12.6 H5.5 Z" fill="#eec66a" stroke="#d9a93f" stroke-width=".7"/><path d="M7.6 2.2 H12.6 V13.6 H7.6 Z" fill="#f3d58a" stroke="#d9a93f" stroke-width=".6"/><path d="M.6 .6 L6.2 2.6 V15.6 L.6 13.2 Z" fill="url(#fg)" stroke="#dcae45" stroke-width=".7" stroke-linejoin="round"/><path d="M6.2 9.8 H13 V13.8 L6.2 15.6 Z" fill="#e8bd58" stroke="#d9a93f" stroke-width=".6"/><rect x="11.4" y="9.2" width="1.3" height="2.3" rx=".6" fill="#fff"/><rect x="11.4" y="11.5" width="1.3" height=".9" fill="#4cae4c"/></svg>
<div class="tr" id="tr3" style="left:95.6px;top:168px">LeftElectrode</div>
<svg class="abs" style="left:59px;top:192px" width="6" height="10" viewBox="0 0 6 10"><path d="M.8 1 L4.8 5 L.8 9 Z" fill="#fdfdfd" stroke="#a6a6a6" stroke-width="1" stroke-linejoin="round"/></svg>
<svg class="abs" style="left:73px;top:188px" width="15" height="17" viewBox="0 0 15 17"><defs><linearGradient id="fg" x1="0" y1="0" x2="1" y2="0"><stop offset="0" stop-color="#f9e692"/><stop offset="1" stop-color="#efcf6c"/></linearGradient></defs><path d="M5.5 .6 H11.6 V12.6 H5.5 Z" fill="#eec66a" stroke="#d9a93f" stroke-width=".7"/><path d="M7.6 2.2 H12.6 V13.6 H7.6 Z" fill="#f3d58a" stroke="#d9a93f" stroke-width=".6"/><path d="M.6 .6 L6.2 2.6 V15.6 L.6 13.2 Z" fill="url(#fg)" stroke="#dcae45" stroke-width=".7" stroke-linejoin="round"/><path d="M6.2 9.8 H13 V13.8 L6.2 15.6 Z" fill="#e8bd58" stroke="#d9a93f" stroke-width=".6"/><rect x="11.4" y="9.2" width="1.3" height="2.3" rx=".6" fill="#fff"/><rect x="11.4" y="11.5" width="1.3" height=".9" fill="#4cae4c"/></svg>
<div class="tr" id="tr4" style="left:95.6px;top:187px">RightElectrode</div>
<svg class="abs" style="left:59px;top:211px" width="6" height="10" viewBox="0 0 6 10"><path d="M.8 1 L4.8 5 L.8 9 Z" fill="#fdfdfd" stroke="#a6a6a6" stroke-width="1" stroke-linejoin="round"/></svg>
<svg class="abs" style="left:73px;top:207px" width="15" height="17" viewBox="0 0 15 17"><defs><linearGradient id="fg" x1="0" y1="0" x2="1" y2="0"><stop offset="0" stop-color="#f9e692"/><stop offset="1" stop-color="#efcf6c"/></linearGradient></defs><path d="M5.5 .6 H11.6 V12.6 H5.5 Z" fill="#eec66a" stroke="#d9a93f" stroke-width=".7"/><path d="M7.6 2.2 H12.6 V13.6 H7.6 Z" fill="#f3d58a" stroke="#d9a93f" stroke-width=".6"/><path d="M.6 .6 L6.2 2.6 V15.6 L.6 13.2 Z" fill="url(#fg)" stroke="#dcae45" stroke-width=".7" stroke-linejoin="round"/><path d="M6.2 9.8 H13 V13.8 L6.2 15.6 Z" fill="#e8bd58" stroke="#d9a93f" stroke-width=".6"/><rect x="11.4" y="9.2" width="1.3" height="2.3" rx=".6" fill="#fff"/><rect x="11.4" y="11.5" width="1.3" height=".9" fill="#4cae4c"/></svg>
<div class="tr" id="tr5" style="left:95.6px;top:206px">Device</div>
<svg class="abs" style="left:53px;top:227px" width="17" height="16" viewBox="0 0 17 16"><path d="M4.5 .8 H12.3 L15.6 3.8 V15 H4.5 Z" fill="#cfe3fb" stroke="#5b7eb2" stroke-width="1"/><path d="M12.3 .8 V3.8 H15.6" fill="#9dbde6" stroke="#5b7eb2" stroke-width=".8"/><path d="M6 2.6 H11 M6 13.4 H14" stroke="#eaf3ff" stroke-width="1.2"/><rect x=".5" y="4.3" width="15" height="8.4" fill="#2b86e0" stroke="#3b6fb6" stroke-width=".8"/><g stroke="#fff" stroke-width=".95" fill="none"><path d="M2.4 6.1V11M5.2 6.1V11M2.4 8.5H5.2"/><path d="M6.8 6.6H9.6L6.8 10.5H9.8"/><path d="M11.1 6.1L11.8 11L12.8 7.8L13.8 11L14.5 6.1"/></g></svg>
<div class="tr" id="tr6" style="left:75.4px;top:225px">azulene.hzw</div>
<svg class="abs" style="left:53px;top:246px" width="17" height="16" viewBox="0 0 17 16"><path d="M4.5 .8 H12.3 L15.6 3.8 V15 H4.5 Z" fill="#cfe3fb" stroke="#5b7eb2" stroke-width="1"/><path d="M12.3 .8 V3.8 H15.6" fill="#9dbde6" stroke="#5b7eb2" stroke-width=".8"/><path d="M6 2.6 H11 M6 13.4 H14" stroke="#eaf3ff" stroke-width="1.2"/><rect x=".5" y="4.3" width="15" height="8.4" fill="#2b86e0" stroke="#3b6fb6" stroke-width=".8"/><g stroke="#fff" stroke-width=".95" fill="none"><path d="M2.4 6.1V11M5.2 6.1V11M2.4 8.5H5.2"/><path d="M6.8 6.6H9.6L6.8 10.5H9.8"/><path d="M11.1 6.1L11.8 11L12.8 7.8L13.8 11L14.5 6.1"/></g></svg>
<div class="tr" id="tr7" style="left:75.4px;top:244px">ZnO-MgO-Si.hzw</div>
<svg class="abs" style="left:53px;top:265px" width="17" height="16" viewBox="0 0 17 16"><path d="M4.5 .8 H12.3 L15.6 3.8 V15 H4.5 Z" fill="#cfe3fb" stroke="#5b7eb2" stroke-width="1"/><path d="M12.3 .8 V3.8 H15.6" fill="#9dbde6" stroke="#5b7eb2" stroke-width=".8"/><path d="M6 2.6 H11 M6 13.4 H14" stroke="#eaf3ff" stroke-width="1.2"/><rect x=".5" y="4.3" width="15" height="8.4" fill="#2b86e0" stroke="#3b6fb6" stroke-width=".8"/><g stroke="#fff" stroke-width=".95" fill="none"><path d="M2.4 6.1V11M5.2 6.1V11M2.4 8.5H5.2"/><path d="M6.8 6.6H9.6L6.8 10.5H9.8"/><path d="M11.1 6.1L11.8 11L12.8 7.8L13.8 11L14.5 6.1"/></g></svg>
<div class="tr" id="tr8" style="left:75.4px;top:263px">Si4.hzw</div>
<svg class="abs" style="left:53px;top:284px" width="17" height="16" viewBox="0 0 17 16"><path d="M4.5 .8 H12.3 L15.6 3.8 V15 H4.5 Z" fill="#cfe3fb" stroke="#5b7eb2" stroke-width="1"/><path d="M12.3 .8 V3.8 H15.6" fill="#9dbde6" stroke="#5b7eb2" stroke-width=".8"/><path d="M6 2.6 H11 M6 13.4 H14" stroke="#eaf3ff" stroke-width="1.2"/><rect x=".5" y="4.3" width="15" height="8.4" fill="#2b86e0" stroke="#3b6fb6" stroke-width=".8"/><g stroke="#fff" stroke-width=".95" fill="none"><path d="M2.4 6.1V11M5.2 6.1V11M2.4 8.5H5.2"/><path d="M6.8 6.6H9.6L6.8 10.5H9.8"/><path d="M11.1 6.1L11.8 11L12.8 7.8L13.8 11L14.5 6.1"/></g></svg>
<div class="tr" id="tr9" style="left:75.4px;top:282px">H2O.hzw</div>
<svg class="abs" style="left:53px;top:303px" width="17" height="16" viewBox="0 0 17 16"><path d="M4.5 .8 H12.3 L15.6 3.8 V15 H4.5 Z" fill="#cfe3fb" stroke="#5b7eb2" stroke-width="1"/><path d="M12.3 .8 V3.8 H15.6" fill="#9dbde6" stroke="#5b7eb2" stroke-width=".8"/><path d="M6 2.6 H11 M6 13.4 H14" stroke="#eaf3ff" stroke-width="1.2"/><rect x=".5" y="4.3" width="15" height="8.4" fill="#2b86e0" stroke="#3b6fb6" stroke-width=".8"/><g stroke="#fff" stroke-width=".95" fill="none"><path d="M2.4 6.1V11M5.2 6.1V11M2.4 8.5H5.2"/><path d="M6.8 6.6H9.6L6.8 10.5H9.8"/><path d="M11.1 6.1L11.8 11L12.8 7.8L13.8 11L14.5 6.1"/></g></svg>
<div class="tr" id="tr10" style="left:75.4px;top:301px">NaCl.hzw</div>
<svg class="abs" style="left:53px;top:322px" width="17" height="16" viewBox="0 0 17 16"><path d="M4.5 .8 H12.3 L15.6 3.8 V15 H4.5 Z" fill="#cfe3fb" stroke="#5b7eb2" stroke-width="1"/><path d="M12.3 .8 V3.8 H15.6" fill="#9dbde6" stroke="#5b7eb2" stroke-width=".8"/><path d="M6 2.6 H11 M6 13.4 H14" stroke="#eaf3ff" stroke-width="1.2"/><rect x=".5" y="4.3" width="15" height="8.4" fill="#2b86e0" stroke="#3b6fb6" stroke-width=".8"/><g stroke="#fff" stroke-width=".95" fill="none"><path d="M2.4 6.1V11M5.2 6.1V11M2.4 8.5H5.2"/><path d="M6.8 6.6H9.6L6.8 10.5H9.8"/><path d="M11.1 6.1L11.8 11L12.8 7.8L13.8 11L14.5 6.1"/></g></svg>
<div class="tr" id="tr11" style="left:75.4px;top:320px">NaCl(111).hzw</div>
<svg class="abs" style="left:53px;top:341px" width="17" height="16" viewBox="0 0 17 16"><path d="M4.5 .8 H12.3 L15.6 3.8 V15 H4.5 Z" fill="#cfe3fb" stroke="#5b7eb2" stroke-width="1"/><path d="M12.3 .8 V3.8 H15.6" fill="#9dbde6" stroke="#5b7eb2" stroke-width=".8"/><path d="M6 2.6 H11 M6 13.4 H14" stroke="#eaf3ff" stroke-width="1.2"/><rect x=".5" y="4.3" width="15" height="8.4" fill="#2b86e0" stroke="#3b6fb6" stroke-width=".8"/><g stroke="#fff" stroke-width=".95" fill="none"><path d="M2.4 6.1V11M5.2 6.1V11M2.4 8.5H5.2"/><path d="M6.8 6.6H9.6L6.8 10.5H9.8"/><path d="M11.1 6.1L11.8 11L12.8 7.8L13.8 11L14.5 6.1"/></g></svg>
<div class="tr" id="tr12" style="left:75.4px;top:339px">Cu.hzw</div>
<svg class="abs" style="left:53px;top:360px" width="17" height="16" viewBox="0 0 17 16"><path d="M4.5 .8 H12.3 L15.6 3.8 V15 H4.5 Z" fill="#cfe3fb" stroke="#5b7eb2" stroke-width="1"/><path d="M12.3 .8 V3.8 H15.6" fill="#9dbde6" stroke="#5b7eb2" stroke-width=".8"/><path d="M6 2.6 H11 M6 13.4 H14" stroke="#eaf3ff" stroke-width="1.2"/><rect x=".5" y="4.3" width="15" height="8.4" fill="#2b86e0" stroke="#3b6fb6" stroke-width=".8"/><g stroke="#fff" stroke-width=".95" fill="none"><path d="M2.4 6.1V11M5.2 6.1V11M2.4 8.5H5.2"/><path d="M6.8 6.6H9.6L6.8 10.5H9.8"/><path d="M11.1 6.1L11.8 11L12.8 7.8L13.8 11L14.5 6.1"/></g></svg>
<div class="tr" id="tr13" style="left:75.4px;top:358px">Cu_Rede.hzw</div>
<svg class="abs" style="left:53px;top:379px" width="17" height="16" viewBox="0 0 17 16"><path d="M4.5 .8 H12.3 L15.6 3.8 V15 H4.5 Z" fill="#cfe3fb" stroke="#5b7eb2" stroke-width="1"/><path d="M12.3 .8 V3.8 H15.6" fill="#9dbde6" stroke="#5b7eb2" stroke-width=".8"/><path d="M6 2.6 H11 M6 13.4 H14" stroke="#eaf3ff" stroke-width="1.2"/><rect x=".5" y="4.3" width="15" height="8.4" fill="#2b86e0" stroke="#3b6fb6" stroke-width=".8"/><g stroke="#fff" stroke-width=".95" fill="none"><path d="M2.4 6.1V11M5.2 6.1V11M2.4 8.5H5.2"/><path d="M6.8 6.6H9.6L6.8 10.5H9.8"/><path d="M11.1 6.1L11.8 11L12.8 7.8L13.8 11L14.5 6.1"/></g></svg>
<div class="tr" id="tr14" style="left:75.4px;top:377px">Cu_Rede_Rede.hzw</div>
<svg class="abs" style="left:53px;top:398px" width="17" height="16" viewBox="0 0 17 16"><path d="M4.5 .8 H12.3 L15.6 3.8 V15 H4.5 Z" fill="#cfe3fb" stroke="#5b7eb2" stroke-width="1"/><path d="M12.3 .8 V3.8 H15.6" fill="#9dbde6" stroke="#5b7eb2" stroke-width=".8"/><path d="M6 2.6 H11 M6 13.4 H14" stroke="#eaf3ff" stroke-width="1.2"/><rect x=".5" y="4.3" width="15" height="8.4" fill="#2b86e0" stroke="#3b6fb6" stroke-width=".8"/><g stroke="#fff" stroke-width=".95" fill="none"><path d="M2.4 6.1V11M5.2 6.1V11M2.4 8.5H5.2"/><path d="M6.8 6.6H9.6L6.8 10.5H9.8"/><path d="M11.1 6.1L11.8 11L12.8 7.8L13.8 11L14.5 6.1"/></g></svg>
<div class="tr" id="tr15" style="left:75.4px;top:396px">Au.hzw</div>
<svg class="abs" style="left:53px;top:417px" width="17" height="16" viewBox="0 0 17 16"><path d="M4.5 .8 H12.3 L15.6 3.8 V15 H4.5 Z" fill="#cfe3fb" stroke="#5b7eb2" stroke-width="1"/><path d="M12.3 .8 V3.8 H15.6" fill="#9dbde6" stroke="#5b7eb2" stroke-width=".8"/><path d="M6 2.6 H11 M6 13.4 H14" stroke="#eaf3ff" stroke-width="1.2"/><rect x=".5" y="4.3" width="15" height="8.4" fill="#2b86e0" stroke="#3b6fb6" stroke-width=".8"/><g stroke="#fff" stroke-width=".95" fill="none"><path d="M2.4 6.1V11M5.2 6.1V11M2.4 8.5H5.2"/><path d="M6.8 6.6H9.6L6.8 10.5H9.8"/><path d="M11.1 6.1L11.8 11L12.8 7.8L13.8 11L14.5 6.1"/></g></svg>
<div class="tr" id="tr16" style="left:75.4px;top:415px">Au_Rede.hzw</div>
<svg class="abs" style="left:53px;top:436px" width="17" height="16" viewBox="0 0 17 16"><path d="M4.5 .8 H12.3 L15.6 3.8 V15 H4.5 Z" fill="#cfe3fb" stroke="#5b7eb2" stroke-width="1"/><path d="M12.3 .8 V3.8 H15.6" fill="#9dbde6" stroke="#5b7eb2" stroke-width=".8"/><path d="M6 2.6 H11 M6 13.4 H14" stroke="#eaf3ff" stroke-width="1.2"/><rect x=".5" y="4.3" width="15" height="8.4" fill="#2b86e0" stroke="#3b6fb6" stroke-width=".8"/><g stroke="#fff" stroke-width=".95" fill="none"><path d="M2.4 6.1V11M5.2 6.1V11M2.4 8.5H5.2"/><path d="M6.8 6.6H9.6L6.8 10.5H9.8"/><path d="M11.1 6.1L11.8 11L12.8 7.8L13.8 11L14.5 6.1"/></g></svg>
<div class="tr" id="tr17" style="left:75.4px;top:434px">Au_Rede_Rede.hzw</div>
<svg class="abs" style="left:53px;top:455px" width="17" height="16" viewBox="0 0 17 16"><path d="M4.5 .8 H12.3 L15.6 3.8 V15 H4.5 Z" fill="#cfe3fb" stroke="#5b7eb2" stroke-width="1"/><path d="M12.3 .8 V3.8 H15.6" fill="#9dbde6" stroke="#5b7eb2" stroke-width=".8"/><path d="M6 2.6 H11 M6 13.4 H14" stroke="#eaf3ff" stroke-width="1.2"/><rect x=".5" y="4.3" width="15" height="8.4" fill="#2b86e0" stroke="#3b6fb6" stroke-width=".8"/><g stroke="#fff" stroke-width=".95" fill="none"><path d="M2.4 6.1V11M5.2 6.1V11M2.4 8.5H5.2"/><path d="M6.8 6.6H9.6L6.8 10.5H9.8"/><path d="M11.1 6.1L11.8 11L12.8 7.8L13.8 11L14.5 6.1"/></g></svg>
<div class="tr" id="tr18" style="left:75.4px;top:453px">Au_SuperCell.hzw</div>
<svg class="abs" style="left:53px;top:474px" width="17" height="16" viewBox="0 0 17 16"><path d="M4.5 .8 H12.3 L15.6 3.8 V15 H4.5 Z" fill="#cfe3fb" stroke="#5b7eb2" stroke-width="1"/><path d="M12.3 .8 V3.8 H15.6" fill="#9dbde6" stroke="#5b7eb2" stroke-width=".8"/><path d="M6 2.6 H11 M6 13.4 H14" stroke="#eaf3ff" stroke-width="1.2"/><rect x=".5" y="4.3" width="15" height="8.4" fill="#2b86e0" stroke="#3b6fb6" stroke-width=".8"/><g stroke="#fff" stroke-width=".95" fill="none"><path d="M2.4 6.1V11M5.2 6.1V11M2.4 8.5H5.2"/><path d="M6.8 6.6H9.6L6.8 10.5H9.8"/><path d="M11.1 6.1L11.8 11L12.8 7.8L13.8 11L14.5 6.1"/></g></svg>
<div class="tr" id="tr19" style="left:75.4px;top:472px">Au_SuperCell_1.hzw</div>
<div class="abs" style="left:53px;top:493px;width:17px;height:1px;overflow:hidden"><div style="width:11px;height:1px;margin-left:4px;background:#7f9cc6"></div></div>
<!-- Properties dock -->
<div class="dockhdr" style="left:8px;top:518px;width:258px;height:19px"></div>
<div class="t mono" id="dk2" style="left:10px;top:523px">Properties</div>
<svg class="abs" style="left:236px;top:523px" width="28" height="12" viewBox="0 0 28 12"><path d="M3.8 1.2 H8.8 V6.2 H7.4" fill="none" stroke="#111" stroke-width="1.5"/><rect x="1.7" y="4" width="5.2" height="4.8" fill="#dedede" stroke="#111" stroke-width="1.5"/><path d="M17.6 1.6 L24.4 8.4 M24.4 1.6 L17.6 8.4" stroke="#111" stroke-width="1.7"/></svg>
<div class="abs" style="left:9px;top:541px;width:256px;height:19px;border:1px solid #b8b8b8;border-radius:3px;background:linear-gradient(#f6f6f6,#ececec 50%,#e2e2e2 51%,#efefef);box-shadow:inset 0 0 0 1px rgba(255,255,255,.7)"></div>
<div class="t mono" id="dk3" style="left:13px;top:545px;color:#7e7e7e">Symmetry System</div>
<svg class="abs" style="left:250px;top:548px" width="9" height="6" viewBox="0 0 9 6"><path d="M1 1 H8 L4.5 5 Z" fill="#9a9a9a"/></svg>
<div class="abs" style="left:9px;top:561px;width:256px;height:225px;border:1px solid #828790;background:#c7edcc;overflow:hidden"></div>
<div class="abs" style="left:10px;top:562px;width:237px;height:24px;background:linear-gradient(#ffffff 0%,#ffffff 40%,#f5f6f8 42%,#f0f1f4 100%);border-bottom:1px solid #d5d5d5"></div>
<div class="abs" style="left:10px;top:586px;width:237px;height:1px;background:#f7fbf7"></div>
<div class="abs" style="left:109px;top:562px;width:1px;height:24px;background:#dedfe1"></div>
<div class="hd" id="ph1" style="left:29.4px;top:567px">Properties</div>
<div class="hd" id="ph2" style="left:163px;top:567px">Value</div>
<div class="abs" style="left:10px;top:587px;width:237px;height:198px;overflow:hidden">
<div class="abs" style="left:0;top:29px;width:237px;height:1px;background:#a8b5aa"></div>
<div class="pr" id="pk0" style="left:3px;top:7px">VectorA (xyz)</div>
<div class="pr" id="pv0_0" style="left:103px;top:0px">16.933671 0.000000</div>
<div class="pr" id="pv0_1" style="left:103px;top:14px">0.000000</div>
<div class="abs" style="left:0;top:59px;width:237px;height:1px;background:#a8b5aa"></div>
<div class="pr" id="pk1" style="left:3px;top:37px">VectorB (xyz)</div>
<div class="pr" id="pv1_0" style="left:103px;top:30px">0.000000 16.933671</div>
<div class="pr" id="pv1_1" style="left:103px;top:44px">0.000000</div>
<div class="abs" style="left:0;top:89px;width:237px;height:1px;background:#a8b5aa"></div>
<div class="pr" id="pk2" style="left:3px;top:67px">VectorC (xyz)</div>
<div class="pr" id="pv2_0" style="left:103px;top:60px">0.000000 0.000000</div>
<div class="pr" id="pv2_1" style="left:103px;top:74px">29.777955</div>
<div class="abs" style="left:0;top:119px;width:237px;height:1px;background:#a8b5aa"></div>
<div class="pr" id="pk3" style="left:3px;top:97px">VectorC(L)(xyz)</div>
<div class="pr" id="pv3_0" style="left:103px;top:90px">0.000000 0.000000</div>
<div class="pr" id="pv3_1" style="left:103px;top:104px">4.080002</div>
<div class="abs" style="left:0;top:149px;width:237px;height:1px;background:#a8b5aa"></div>
<div class="pr" id="pk4" style="left:3px;top:127px">VectorC(R)(xyz)</div>
<div class="pr" id="pv4_0" style="left:103px;top:120px">0.000000 0.000000</div>
<div class="pr" id="pv4_1" style="left:103px;top:134px">4.080002</div>
<div class="abs" style="left:0;top:179px;width:237px;height:1px;background:#a8b5aa"></div>
<div class="pr" id="pk5_0" style="left:3px;top:150px">Total Num of</div>
<div class="pr" id="pk5_1" style="left:3px;top:164px">Atoms:</div>
<div class="pr" id="pv5_0" style="left:103px;top:157px">71</div>
<div class="abs" style="left:0;top:209px;width:237px;height:1px;background:#a8b5aa"></div>
<div class="pr" id="pk6_0" style="left:3px;top:180px">Center Area of</div>
<div class="pr" id="pk6_1" style="left:3px;top:194px">Lattice:</div>
<div class="pr" id="pv6_0" style="left:103px;top:187px">8538.804903</div>
<div class="abs" style="left:99px;top:0;width:1px;height:198px;background:#a8b5aa"></div>
</div>
<div class="sbv" style="left:247px;top:562px;width:17px;height:223px"></div>
<div class="thumbv" style="left:248px;top:581px;width:15px;height:159px"></div>
<svg class="abs" style="left:247px;top:562px" width="18" height="223" viewBox="0 0 18 223"><path d="M5 11 L8.5 7 L12 11 Z" fill="#444"/><path d="M5 212 L12 212 L8.5 216 Z" fill="#444"/><path d="M5.5 94.5h6M5.5 96.5h6M5.5 98.5h6M5.5 100.5h6" stroke="#5a5a5a" stroke-width="1"/></svg>

<!-- viewport -->
<div id="viewport" class="abs"></div>
<svg class="abs" style="left:270px;top:87px" width="1021" height="428" viewBox="270 87 1021 428">
<defs>
<radialGradient id="au" cx=".52" cy=".5" r=".5"><stop offset="0" stop-color="#ffffff"/><stop offset=".1" stop-color="#fbf1b8"/><stop offset=".28" stop-color="#e6cb57"/><stop offset=".6" stop-color="#d1b03c"/><stop offset=".85" stop-color="#b5952c"/><stop offset="1" stop-color="#8f7420"/></radialGradient>
<radialGradient id="aub" cx=".52" cy=".5" r=".5"><stop offset="0" stop-color="#ffffff"/><stop offset=".1" stop-color="#f6e9a8"/><stop offset=".28" stop-color="#d9bd4c"/><stop offset=".6" stop-color="#c2a236"/><stop offset=".85" stop-color="#a38627"/><stop offset="1" stop-color="#7d651b"/></radialGradient>
<radialGradient id="su" cx=".52" cy=".5" r=".5"><stop offset="0" stop-color="#fff3bf"/><stop offset=".14" stop-color="#efd062"/><stop offset=".5" stop-color="#dbb037"/><stop offset=".85" stop-color="#b78d22"/><stop offset="1" stop-color="#8c6b18"/></radialGradient>
<radialGradient id="cc" cx=".5" cy=".47" r=".52"><stop offset="0" stop-color="#f6f6f6"/><stop offset=".13" stop-color="#b4b4b4"/><stop offset=".55" stop-color="#808080"/><stop offset=".85" stop-color="#666"/><stop offset="1" stop-color="#4a4a4a"/></radialGradient>
<radialGradient id="hh" cx=".5" cy=".5" r=".5"><stop offset="0" stop-color="#ffffff"/><stop offset=".3" stop-color="#efefef"/><stop offset=".65" stop-color="#d4d4d4"/><stop offset=".88" stop-color="#adadad"/><stop offset="1" stop-color="#4e4e4e"/></radialGradient>
<clipPath id="dclip"><rect x="461" y="150" width="649.3" height="300"/></clipPath>
<clipPath id="boxclip"><rect x="459.5" y="150" width="651.5" height="300"/></clipPath>
<radialGradient id="aubc" gradientUnits="objectBoundingBox" cx=".53" cy=".5" r=".5"><stop offset="0" stop-color="#ffffff"/><stop offset=".18" stop-color="#f6e9a8"/><stop offset=".5" stop-color="#d9bd4c"/><stop offset="1" stop-color="#c9aa3c"/></radialGradient>
</defs>
<text x="519.7" y="169.6" font-family="Liberation Sans" font-size="16.3px" fill="#10a810">B</text>
<text x="1040.3" y="459.4" font-family="Liberation Sans" font-size="16px" fill="#1c7ed6">C</text>
<ellipse cx="523.9" cy="453.1" rx="5.3" ry="5.8" fill="none" stroke="#d6dada" stroke-width="1.7"/><text x="518.8" y="459" font-family="Liberation Sans" font-size="16.3px" fill="#e00000" stroke="#e00000" stroke-width=".5">A</text>
<g><text x="317.6" y="475.4" font-family="Liberation Sans" font-size="10.5px" fill="#8a8a8a">X</text><circle cx="316.5" cy="475.8" r="3.4" fill="#f2f2f2"/><path d="M316.5 475.5 V452" stroke="#0fd40f" stroke-width="2.6"/><path d="M313 453.5 L316.5 442.6 L320 453.5 Z" fill="#0fd40f"/><path d="M317.5 475.8 H345" stroke="#e6e619" stroke-width="2.2"/><path d="M344.6 472.6 L355.5 475.8 L344.6 479.2 Z" fill="#d9d912"/><g font-family="Liberation Sans" font-size="10.5px" fill="#a8a8a8"><text x="316.6" y="445">Y</text><text x="354.3" y="476">Z</text></g></g>
<g clip-path="url(#boxclip)">
<g clip-path="url(#dclip)" stroke="#7a5f10" stroke-width="2.9" stroke-linecap="butt"><path d="M443.6 266.1L478.5 300.8"/><path d="M443.6 300.8L478.5 266.1"/><path d="M443.6 300.8L478.5 335.5"/><path d="M443.6 335.5L478.5 300.8"/><path d="M478.5 266.1L513.4 300.8"/><path d="M478.5 300.8L513.4 266.1"/><path d="M478.5 300.8L513.4 335.5"/><path d="M478.5 335.5L513.4 300.8"/><path d="M513.4 266.1L548.2 300.8"/><path d="M513.4 300.8L548.2 266.1"/><path d="M513.4 300.8L548.2 335.5"/><path d="M513.4 335.5L548.2 300.8"/><path d="M548.2 266.1L583.1 300.8"/><path d="M548.2 300.8L583.1 266.1"/><path d="M548.2 300.8L583.1 335.5"/><path d="M548.2 335.5L583.1 300.8"/><path d="M583.1 266.1L618.0 300.8"/><path d="M583.1 300.8L618.0 266.1"/><path d="M583.1 300.8L618.0 335.5"/><path d="M583.1 335.5L618.0 300.8"/><path d="M618.0 266.1L652.9 300.8"/><path d="M618.0 300.8L652.9 266.1"/><path d="M618.0 300.8L652.9 335.5"/><path d="M618.0 335.5L652.9 300.8"/><path d="M952.3 266.1L987.2 300.8"/><path d="M952.3 300.8L987.2 266.1"/><path d="M952.3 300.8L987.2 335.5"/><path d="M952.3 335.5L987.2 300.8"/><path d="M987.2 266.1L1022.0 300.8"/><path d="M987.2 300.8L1022.0 266.1"/><path d="M987.2 300.8L1022.0 335.5"/><path d="M987.2 335.5L1022.0 300.8"/><path d="M1022.0 266.1L1056.9 300.8"/><path d="M1022.0 300.8L1056.9 266.1"/><path d="M1022.0 300.8L1056.9 335.5"/><path d="M1022.0 335.5L1056.9 300.8"/><path d="M1056.9 266.1L1091.8 300.8"/><path d="M1056.9 300.8L1091.8 266.1"/><path d="M1056.9 300.8L1091.8 335.5"/><path d="M1056.9 335.5L1091.8 300.8"/><path d="M1091.8 266.1L1126.6 300.8"/><path d="M1091.8 300.8L1126.6 266.1"/><path d="M1091.8 300.8L1126.6 335.5"/><path d="M1091.8 335.5L1126.6 300.8"/><path d="M652.9 266.1L688.0 297.4"/><path d="M652.9 300.8L688.0 297.4"/><path d="M952.3 300.8L917.1 304.1"/><path d="M952.3 335.5L917.1 304.1"/></g>
<g clip-path="url(#dclip)" stroke="#d9ae22" stroke-width="1.9" stroke-linecap="butt"><path d="M443.6 266.1L478.5 300.8"/><path d="M443.6 300.8L478.5 266.1"/><path d="M443.6 300.8L478.5 335.5"/><path d="M443.6 335.5L478.5 300.8"/><path d="M478.5 266.1L513.4 300.8"/><path d="M478.5 300.8L513.4 266.1"/><path d="M478.5 300.8L513.4 335.5"/><path d="M478.5 335.5L513.4 300.8"/><path d="M513.4 266.1L548.2 300.8"/><path d="M513.4 300.8L548.2 266.1"/><path d="M513.4 300.8L548.2 335.5"/><path d="M513.4 335.5L548.2 300.8"/><path d="M548.2 266.1L583.1 300.8"/><path d="M548.2 300.8L583.1 266.1"/><path d="M548.2 300.8L583.1 335.5"/><path d="M548.2 335.5L583.1 300.8"/><path d="M583.1 266.1L618.0 300.8"/><path d="M583.1 300.8L618.0 266.1"/><path d="M583.1 300.8L618.0 335.5"/><path d="M583.1 335.5L618.0 300.8"/><path d="M618.0 266.1L652.9 300.8"/><path d="M618.0 300.8L652.9 266.1"/><path d="M618.0 300.8L652.9 335.5"/><path d="M618.0 335.5L652.9 300.8"/><path d="M952.3 266.1L987.2 300.8"/><path d="M952.3 300.8L987.2 266.1"/><path d="M952.3 300.8L987.2 335.5"/><path d="M952.3 335.5L987.2 300.8"/><path d="M987.2 266.1L1022.0 300.8"/><path d="M987.2 300.8L1022.0 266.1"/><path d="M987.2 300.8L1022.0 335.5"/><path d="M987.2 335.5L1022.0 300.8"/><path d="M1022.0 266.1L1056.9 300.8"/><path d="M1022.0 300.8L1056.9 266.1"/><path d="M1022.0 300.8L1056.9 335.5"/><path d="M1022.0 335.5L1056.9 300.8"/><path d="M1056.9 266.1L1091.8 300.8"/><path d="M1056.9 300.8L1091.8 266.1"/><path d="M1056.9 300.8L1091.8 335.5"/><path d="M1056.9 335.5L1091.8 300.8"/><path d="M1091.8 266.1L1126.6 300.8"/><path d="M1091.8 300.8L1126.6 266.1"/><path d="M1091.8 300.8L1126.6 335.5"/><path d="M1091.8 335.5L1126.6 300.8"/><path d="M652.9 266.1L688.0 297.4"/><path d="M652.9 300.8L688.0 297.4"/><path d="M952.3 300.8L917.1 304.1"/><path d="M952.3 335.5L917.1 304.1"/></g>
<g><circle cx="478.5" cy="300.8" r="9.4" fill="url(#aub)"/><circle cx="513.4" cy="266.1" r="9.4" fill="url(#aub)"/><circle cx="513.4" cy="335.5" r="9.4" fill="url(#aub)"/><circle cx="548.2" cy="300.8" r="9.4" fill="url(#aub)"/><circle cx="583.1" cy="266.1" r="9.4" fill="url(#aub)"/><circle cx="583.1" cy="335.5" r="9.4" fill="url(#aub)"/><circle cx="618.0" cy="300.8" r="9.4" fill="url(#aub)"/><circle cx="652.9" cy="266.1" r="9.4" fill="url(#aub)"/><circle cx="652.9" cy="335.5" r="9.4" fill="url(#aub)"/><circle cx="952.3" cy="266.1" r="9.4" fill="url(#aub)"/><circle cx="952.3" cy="335.5" r="9.4" fill="url(#aub)"/><circle cx="987.2" cy="300.8" r="9.4" fill="url(#aub)"/><circle cx="1022.0" cy="266.1" r="9.4" fill="url(#aub)"/><circle cx="1022.0" cy="335.5" r="9.4" fill="url(#aub)"/><circle cx="1056.9" cy="300.8" r="9.4" fill="url(#aub)"/><circle cx="1091.8" cy="266.1" r="9.4" fill="url(#aub)"/><circle cx="1091.8" cy="335.5" r="9.4" fill="url(#aub)"/></g>
<g stroke="#7d6412" stroke-width="3.3"><path d="M459.8 266.1L652.9 266.1"/><path d="M459.8 300.8L652.9 300.8"/><path d="M459.8 335.5L652.9 335.5"/><path d="M478.5 266.1L478.5 335.5"/><path d="M513.4 266.1L513.4 335.5"/><path d="M548.2 266.1L548.2 335.5"/><path d="M583.1 266.1L583.1 335.5"/><path d="M618.0 266.1L618.0 335.5"/><path d="M652.9 266.1L652.9 335.5"/><path d="M952.3 266.1L1111.0 266.1"/><path d="M952.3 300.8L1111.0 300.8"/><path d="M952.3 335.5L1111.0 335.5"/><path d="M952.3 266.1L952.3 335.5"/><path d="M987.2 266.1L987.2 335.5"/><path d="M1022.0 266.1L1022.0 335.5"/><path d="M1056.9 266.1L1056.9 335.5"/><path d="M1091.8 266.1L1091.8 335.5"/></g>
<g stroke="#b08c1a" stroke-width="2"><path d="M459.8 266.1L652.9 266.1"/><path d="M459.8 300.8L652.9 300.8"/><path d="M459.8 335.5L652.9 335.5"/><path d="M478.5 266.1L478.5 335.5"/><path d="M513.4 266.1L513.4 335.5"/><path d="M548.2 266.1L548.2 335.5"/><path d="M583.1 266.1L583.1 335.5"/><path d="M618.0 266.1L618.0 335.5"/><path d="M652.9 266.1L652.9 335.5"/><path d="M952.3 266.1L1111.0 266.1"/><path d="M952.3 300.8L1111.0 300.8"/><path d="M952.3 335.5L1111.0 335.5"/><path d="M952.3 266.1L952.3 335.5"/><path d="M987.2 266.1L987.2 335.5"/><path d="M1022.0 266.1L1022.0 335.5"/><path d="M1056.9 266.1L1056.9 335.5"/><path d="M1091.8 266.1L1091.8 335.5"/></g>
<g><circle cx="478.5" cy="300.8" r="5.6" fill="url(#aubc)"/><circle cx="513.4" cy="266.1" r="5.6" fill="url(#aubc)"/><circle cx="513.4" cy="335.5" r="5.6" fill="url(#aubc)"/><circle cx="548.2" cy="300.8" r="5.6" fill="url(#aubc)"/><circle cx="583.1" cy="266.1" r="5.6" fill="url(#aubc)"/><circle cx="583.1" cy="335.5" r="5.6" fill="url(#aubc)"/><circle cx="618.0" cy="300.8" r="5.6" fill="url(#aubc)"/><circle cx="652.9" cy="266.1" r="5.6" fill="url(#aubc)"/><circle cx="652.9" cy="335.5" r="5.6" fill="url(#aubc)"/><circle cx="952.3" cy="266.1" r="5.6" fill="url(#aubc)"/><circle cx="952.3" cy="335.5" r="5.6" fill="url(#aubc)"/><circle cx="987.2" cy="300.8" r="5.6" fill="url(#aubc)"/><circle cx="1022.0" cy="266.1" r="5.6" fill="url(#aubc)"/><circle cx="1022.0" cy="335.5" r="5.6" fill="url(#aubc)"/><circle cx="1056.9" cy="300.8" r="5.6" fill="url(#aubc)"/><circle cx="1091.8" cy="266.1" r="5.6" fill="url(#aubc)"/><circle cx="1091.8" cy="335.5" r="5.6" fill="url(#aubc)"/></g>
<g><circle cx="478.5" cy="266.1" r="9.9" fill="url(#au)"/><circle cx="478.5" cy="335.5" r="9.9" fill="url(#au)"/><circle cx="513.4" cy="300.8" r="9.9" fill="url(#au)"/><circle cx="548.2" cy="266.1" r="9.9" fill="url(#au)"/><circle cx="548.2" cy="335.5" r="9.9" fill="url(#au)"/><circle cx="583.1" cy="300.8" r="9.9" fill="url(#au)"/><circle cx="618.0" cy="266.1" r="9.9" fill="url(#au)"/><circle cx="618.0" cy="335.5" r="9.9" fill="url(#au)"/><circle cx="652.9" cy="300.8" r="9.9" fill="url(#au)"/><circle cx="952.3" cy="300.8" r="9.9" fill="url(#au)"/><circle cx="987.2" cy="266.1" r="9.9" fill="url(#au)"/><circle cx="987.2" cy="335.5" r="9.9" fill="url(#au)"/><circle cx="1022.0" cy="300.8" r="9.9" fill="url(#au)"/><circle cx="1056.9" cy="266.1" r="9.9" fill="url(#au)"/><circle cx="1056.9" cy="335.5" r="9.9" fill="url(#au)"/><circle cx="1091.8" cy="300.8" r="9.9" fill="url(#au)"/></g>
</g>
<g fill="none" stroke="#fafafa" stroke-width="1"><rect x="461.5" y="156.5" width="648" height="289"/><path d="M530.5 156.5V445.5 M1040.5 156.5V445.5"/></g>
<g><path d="M688.0 297.4L705.6 306.9" stroke="#d4a820" stroke-width="3.2"/><path d="M705.6 306.9L723.3 316.3" stroke="#d4a820" stroke-width="3.2"/><path d="M723.3 316.3L735.2 306.2" stroke="#d4a820" stroke-width="3.2"/><path d="M735.2 306.2L747.1 296.2" stroke="#7e7e7e" stroke-width="3.2"/><path d="M747.1 296.2L758.8 302.5" stroke="#7e7e7e" stroke-width="3.4"/><path d="M758.8 302.5L770.5 308.8" stroke="#7e7e7e" stroke-width="3.4"/><path d="M770.5 308.8L781.0 301.4" stroke="#7e7e7e" stroke-width="3.4"/><path d="M781.0 301.4L791.6 293.9" stroke="#7e7e7e" stroke-width="3.4"/><path d="M791.6 293.9L802.8 300.9" stroke="#7e7e7e" stroke-width="3.4"/><path d="M802.8 300.9L814.0 308.0" stroke="#7e7e7e" stroke-width="3.4"/><path d="M814.0 308.0L824.8 300.4" stroke="#7e7e7e" stroke-width="3.4"/><path d="M824.8 300.4L835.6 292.7" stroke="#7e7e7e" stroke-width="3.4"/><path d="M835.6 292.7L847.0 299.2" stroke="#7e7e7e" stroke-width="3.4"/><path d="M847.0 299.2L858.3 305.8" stroke="#7e7e7e" stroke-width="3.4"/><path d="M858.3 305.8L870.3 295.8" stroke="#7e7e7e" stroke-width="3.2"/><path d="M870.3 295.8L882.3 285.8" stroke="#d4a820" stroke-width="3.2"/><path d="M882.3 285.8L899.7 295.0" stroke="#d4a820" stroke-width="3.2"/><path d="M899.7 295.0L917.1 304.1" stroke="#d4a820" stroke-width="3.2"/></g>
<g><circle cx="747.1" cy="296.2" r="8.0" fill="url(#cc)"/><circle cx="770.5" cy="308.8" r="8.0" fill="url(#cc)"/><circle cx="791.6" cy="293.9" r="8.0" fill="url(#cc)"/><circle cx="814.0" cy="308.0" r="8.0" fill="url(#cc)"/><circle cx="835.6" cy="292.7" r="8.0" fill="url(#cc)"/><circle cx="858.3" cy="305.8" r="8.0" fill="url(#cc)"/><circle cx="746.5" cy="284.2" r="7.5" fill="url(#hh)"/><circle cx="770.7" cy="320.7" r="7.5" fill="url(#hh)"/><circle cx="791.3" cy="282.4" r="7.5" fill="url(#hh)"/><circle cx="814.2" cy="319.1" r="7.5" fill="url(#hh)"/><circle cx="835.3" cy="281.3" r="7.5" fill="url(#hh)"/><circle cx="859.0" cy="317.2" r="7.5" fill="url(#hh)"/><circle cx="723.3" cy="316.3" r="8.2" fill="url(#su)"/><circle cx="882.3" cy="285.8" r="8.2" fill="url(#su)"/><circle cx="688.0" cy="297.4" r="9.6" fill="url(#au)"/><circle cx="917.1" cy="304.1" r="9.6" fill="url(#au)"/></g>
</svg>

<!-- job manager -->
<div class="t mono" id="jm1" style="left:279px;top:540px">Job Manager</div>
<div class="t mono" id="jm2" style="left:593px;top:540px">sftp log in successfully</div>
<div class="t mono" id="jm3" style="left:905px;top:540px">log in successfully</div>
<div class="abs" style="left:1220px;top:534px;width:23px;height:22px;border:1px solid #7f7f7f;border-radius:3px;background:linear-gradient(#f3f3f3,#ebebeb 50%,#dadada 52%,#cfcfcf);box-shadow:inset 0 0 0 1px rgba(255,255,255,.75)"></div>
<div class="abs" style="left:1245px;top:534px;width:22px;height:22px;border:1px solid #bcc3c9;border-radius:3px;background:#f3f3f3"></div>
<div class="abs" style="left:1269px;top:534px;width:23px;height:22px;border:1px solid #7f7f7f;border-radius:3px;background:linear-gradient(#f3f3f3,#ebebeb 50%,#dadada 52%,#cfcfcf);box-shadow:inset 0 0 0 1px rgba(255,255,255,.75)"></div>
<svg class="abs" style="left:1220px;top:534px" width="72" height="22" viewBox="1220 534 72 22">
<g fill="none" stroke="#4a4a4a" stroke-width="1.1" stroke-linejoin="round">
<path d="M1230.30 537.20 L1232.70 537.20 L1233.05 539.08 L1234.38 539.63 L1235.96 538.55 L1237.65 540.24 L1236.57 541.82 L1237.12 543.15 L1239.00 543.50 L1239.00 545.90 L1237.12 546.25 L1236.57 547.58 L1237.65 549.16 L1235.96 550.85 L1234.38 549.77 L1233.05 550.32 L1232.70 552.20 L1230.30 552.20 L1229.95 550.32 L1228.62 549.77 L1227.04 550.85 L1225.35 549.16 L1226.43 547.58 L1225.88 546.25 L1224.00 545.90 L1224.00 543.50 L1225.88 543.15 L1226.43 541.82 L1225.35 540.24 L1227.04 538.55 L1228.62 539.63 L1229.95 539.08 Z" fill="#f6f6f6"/>
<circle cx="1231.5" cy="544.7" r="2.6" fill="#e9e9e9"/>
</g>
<g fill="none" stroke="#8c8c8c" stroke-width="1.3">
<path d="M1249.5 540.3 H1251.5 Q1254 540.3 1255.5 544.7 Q1257 549.2 1259.5 549.2 H1261" stroke-dasharray="2.2 1 30"/>
<path d="M1249.5 549.2 H1251.5 Q1253.3 549.2 1254.3 547.3 M1256.8 542.2 Q1257.8 540.3 1259.5 540.3 H1261"/>
<path d="M1260 537.8 L1262.8 540.3 L1260 542.8 M1260 546.7 L1262.8 549.2 L1260 551.7" stroke-width="1.1"/>
</g>
<g fill="#f8f8f8" stroke="#3a3a3a" stroke-width="1" stroke-linejoin="round">
<path d="M1273.4 544.6 C1273.4 540.4 1277.4 538.6 1281.4 539.4 V537.2 L1286.8 541 L1281.4 544.8 V542.6 C1278.8 542 1276.4 542.6 1275.6 545.2 Z"/>
<path d="M1287.6 545.4 C1287.6 549.6 1283.6 551.4 1279.6 550.6 V552.8 L1274.2 549 L1279.6 545.2 V547.4 C1282.2 548 1284.6 547.4 1285.4 544.8 Z"/>
</g>
</svg>
<div class="abs" style="left:279px;top:561px;width:1013px;height:217px;border:1px solid #828790;background:#c7edcc"></div>
<div class="abs" style="left:280px;top:562px;width:1011px;height:24px;background:linear-gradient(#ffffff 0%,#ffffff 40%,#f5f6f8 42%,#f0f1f4 100%);border-bottom:1px solid #d5d5d5"></div>
<div class="abs" style="left:280px;top:586px;width:1011px;height:1px;background:#f7fbf7"></div>
<div class="abs" style="left:429px;top:562px;width:1px;height:24px;background:#dedfe1"></div>
<div class="abs" style="left:1000px;top:562px;width:1px;height:24px;background:#dedfe1"></div>
<div class="abs" style="left:1100px;top:562px;width:1px;height:24px;background:#dedfe1"></div>
<div class="abs" style="left:1200px;top:562px;width:1px;height:24px;background:#dedfe1"></div>
<div class="hd" id="jh0" style="left:322.3px;top:567px">Description</div>
<div class="hd" id="jh1" style="left:698.5px;top:567px">Script</div>
<div class="hd" id="jh2" style="left:1009.3px;top:567px">Commit Status</div>
<div class="hd" id="jh3" style="left:1134.3px;top:567px">Status</div>
<div class="hd" id="jh4" style="left:1230px;top:567px">Actions</div>
<div class="abs" style="left:280px;top:760px;width:1011px;height:17px;background:linear-gradient(#e6e6e6,#f3f3f3 30%,#f0f0f0)"></div>
<div class="thumbh" style="left:298px;top:761px;width:779px;height:15px"></div>
<svg class="abs" style="left:280px;top:760px" width="1011" height="17" viewBox="0 0 1011 17"><path d="M10.5 5 V12 L6.5 8.5 Z" fill="#444"/><path d="M1000.5 5 V12 L1004.5 8.5 Z" fill="#444"/><path d="M403.5 5.5v6M405.5 5.5v6M407.5 5.5v6M409.5 5.5v6" stroke="#5a5a5a" stroke-width="1"/></svg>
<svg class="abs" style="left:1288px;top:796px" width="13" height="13" viewBox="0 0 13 13"><g fill="#b8b8b8"><rect x="9" y="1" width="2" height="2"/><rect x="9" y="5" width="2" height="2"/><rect x="9" y="9" width="2" height="2"/><rect x="5" y="5" width="2" height="2"/><rect x="5" y="9" width="2" height="2"/><rect x="1" y="9" width="2" height="2"/></g></svg>

</body>
</html>
